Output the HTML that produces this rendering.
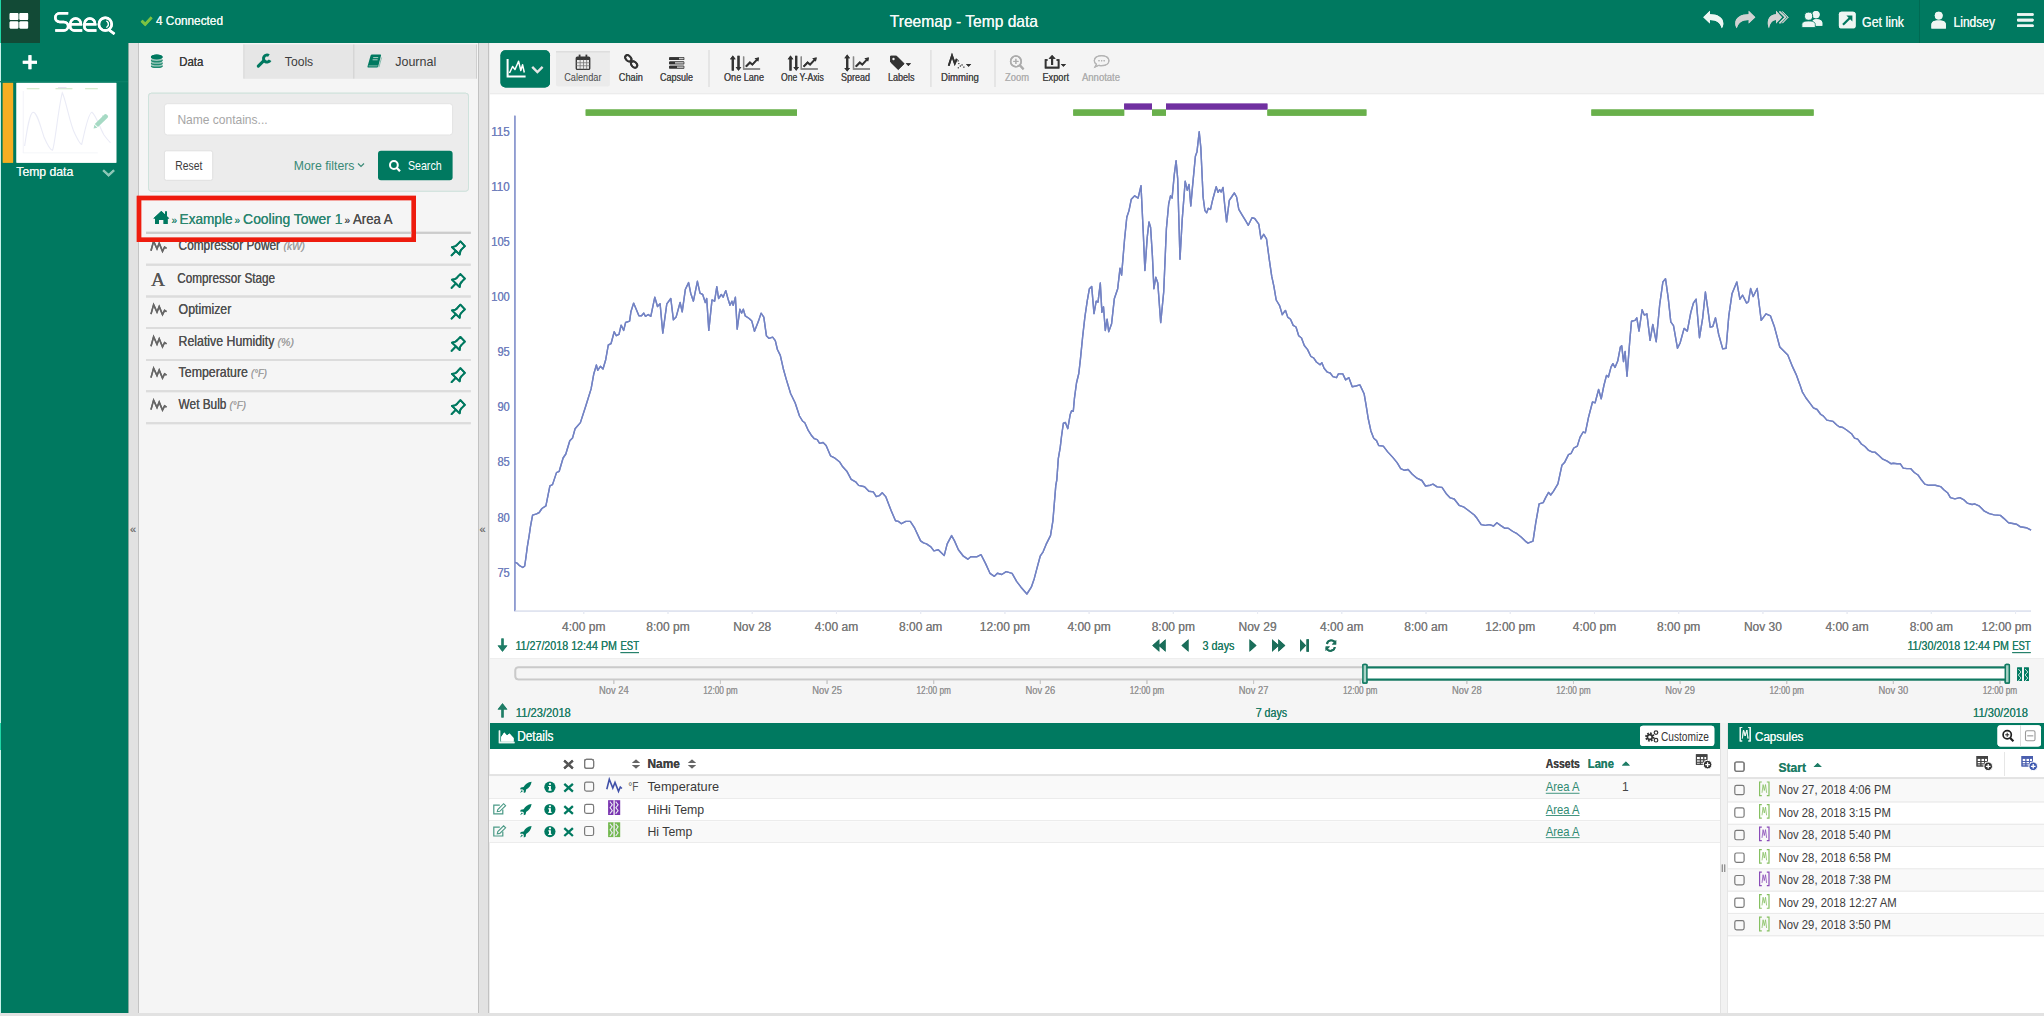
<!DOCTYPE html>
<html><head><meta charset="utf-8"><title>Seeq</title>
<style>
*{margin:0;padding:0}
html,body{width:2044px;height:1016px;overflow:hidden;background:#fff}
svg{display:block;font-family:"Liberation Sans",sans-serif}
</style></head><body>
<svg width="2044" height="1016" viewBox="0 0 2044 1016">
<rect x="0" y="0" width="2044" height="1016" fill="#e2e2e2" />
<rect x="0" y="0" width="2044" height="43.5" fill="#007960" />
<rect x="0" y="0" width="40" height="43" fill="#124a36" />
<rect x="0" y="43" width="128" height="970" fill="#007960" />
<rect x="0" y="0" width="1" height="1013" fill="#c8f2ea" />
<rect x="0" y="0" width="1" height="43" fill="#1fd6a6" />
<rect x="0" y="723" width="1" height="27" fill="#1fd6a6" />
<rect x="128" y="43" width="11" height="970" fill="#e2e2e2" />
<rect x="128" y="43" width="1" height="970" fill="#86a89e" />
<rect x="138" y="43" width="1" height="970" fill="#c4c4c4" />
<rect x="139" y="43" width="339" height="970" fill="#f5f5f5" />
<rect x="478" y="43" width="11" height="970" fill="#e2e2e2" />
<rect x="478" y="43" width="1" height="970" fill="#c2c2c2" />
<rect x="488" y="43" width="1" height="970" fill="#c2c2c2" />
<rect x="489" y="43" width="1" height="970" fill="#ebebeb" />
<rect x="490" y="43" width="1554" height="51" fill="#f4f4f4" />
<rect x="490" y="93" width="1554" height="1" fill="#ececec" />
<rect x="490" y="94" width="1554" height="564" fill="#ffffff" />
<rect x="490" y="94" width="1554" height="1" fill="#f9f9f9" />
<rect x="490" y="658" width="1554" height="65" fill="#f5f5f5" />
<rect x="490" y="658" width="1554" height="1" fill="#eeeeee" />
<rect x="490" y="723" width="1230" height="26" fill="#007960" />
<rect x="490" y="749" width="1230" height="264" fill="#ffffff" />
<rect x="1720" y="723" width="8" height="290" fill="#f2f2f2" />
<rect x="1720" y="723" width="1" height="290" fill="#e2e2e2" />
<rect x="1727" y="723" width="1" height="290" fill="#e6e6e6" />
<rect x="1728" y="723" width="316" height="26" fill="#007960" />
<rect x="1728" y="749" width="316" height="264" fill="#ffffff" />
<rect x="0" y="0" width="2044" height="1016" fill="#e2e2e2" />
<rect x="0" y="0" width="2044" height="43.5" fill="#007960" />
<rect x="0" y="0" width="40" height="43" fill="#124a36" />
<rect x="0" y="43" width="128" height="970" fill="#007960" />
<rect x="0" y="0" width="1" height="1013" fill="#c8f2ea" />
<rect x="0" y="0" width="1" height="43" fill="#1fd6a6" />
<rect x="0" y="723" width="1" height="27" fill="#1fd6a6" />
<rect x="128" y="43" width="11" height="970" fill="#e2e2e2" />
<rect x="128" y="43" width="1" height="970" fill="#86a89e" />
<rect x="138" y="43" width="1" height="970" fill="#c4c4c4" />
<rect x="139" y="43" width="339" height="970" fill="#f5f5f5" />
<rect x="478" y="43" width="11" height="970" fill="#e2e2e2" />
<rect x="478" y="43" width="1" height="970" fill="#c2c2c2" />
<rect x="488" y="43" width="1" height="970" fill="#c2c2c2" />
<rect x="489" y="43" width="1" height="970" fill="#ebebeb" />
<rect x="490" y="43" width="1554" height="51" fill="#f4f4f4" />
<rect x="490" y="93" width="1554" height="1" fill="#ececec" />
<rect x="490" y="94" width="1554" height="564" fill="#ffffff" />
<rect x="490" y="94" width="1554" height="1" fill="#f9f9f9" />
<rect x="490" y="658" width="1554" height="65" fill="#f5f5f5" />
<rect x="490" y="658" width="1554" height="1" fill="#eeeeee" />
<rect x="490" y="723" width="1230" height="26" fill="#007960" />
<rect x="490" y="749" width="1230" height="264" fill="#ffffff" />
<rect x="1720" y="723" width="8" height="290" fill="#f2f2f2" />
<rect x="1720" y="723" width="1" height="290" fill="#e2e2e2" />
<rect x="1727" y="723" width="1" height="290" fill="#e6e6e6" />
<rect x="1728" y="723" width="316" height="26" fill="#007960" />
<rect x="1728" y="749" width="316" height="264" fill="#ffffff" />
<rect x="9.7" y="13" width="8.6" height="6.9" fill="#ffffff" rx="1"/>
<rect x="19.5" y="13" width="8.6" height="6.9" fill="#ffffff" rx="1"/>
<rect x="9.7" y="21.6" width="8.6" height="6.9" fill="#ffffff" rx="1"/>
<rect x="19.5" y="21.6" width="8.6" height="6.9" fill="#ffffff" rx="1"/>
<path d="M68.2,13.3 H59.6 A4.3,4.3 0 0 0 59.6,21.9 H63.9 A4.25,4.25 0 0 1 63.9,30.4 H55.3" fill="none" stroke="#ffffff" stroke-width="2.5" />
<path d="M70.2,24.2 A5.4,5.6 0 0 1 81,24.2 H70.2 V26.4 A4,4 0 0 0 74.2,30.4 H82.2" fill="none" stroke="#ffffff" stroke-width="2.5" />
<path d="M84.4,24.2 A5.4,5.6 0 0 1 95.2,24.2 H84.4 V26.4 A4,4 0 0 0 88.4,30.4 H96.4" fill="none" stroke="#ffffff" stroke-width="2.5" />
<circle cx="105.3" cy="24.2" r="6.4" fill="none" stroke="#fff" stroke-width="2.5"/>
<path d="M106.5,21 A3.6,3.6 0 0 1 106.5,27.4" fill="none" stroke="#ffffff" stroke-width="1.1" />
<path d="M108.5,29.5 L114.5,34" fill="none" stroke="#ffffff" stroke-width="2.6" />
<path d="M141.6,20.8 L145.2,24.3 L151.6,17.3" fill="none" stroke="#7cc242" stroke-width="2.6" />
<text x="156" y="25.1" font-size="12.8" fill="#eef7f4" textLength="67" lengthAdjust="spacingAndGlyphs" >4 Connected</text>
<text x="889.8" y="26.6" font-size="16.6" fill="#f2f9f7" textLength="148.2" lengthAdjust="spacingAndGlyphs" >Treemap - Temp data</text>
<path d="M1703.3,17.2 L1709.9,10.8 V14.3 C1717.8,14.3 1723.3,17.6 1723.3,23.4 C1723.3,25.4 1722.6,27 1721.8,28.3 C1720.8,23.4 1716.8,19.9 1709.9,19.9 V23.6 Z" fill="#eef6f3" />
<path d="M 1755.30 17.20 L 1748.70 10.80 V 14.30 C 1740.80 14.30 1735.30 17.60 1735.30 23.40 C 1735.30 25.40 1736.00 27.00 1736.80 28.30 C 1737.80 23.40 1741.80 19.90 1748.70 19.90 V 23.60 Z" fill="#d2d2d2" />
<path d="M1782,17.2 L1776,10.8 V14.3 C1771,14.3 1767.8,18 1767.8,23 C1767.8,25 1768.3,26.8 1769,28.3 C1769.8,23.6 1772,19.9 1776,19.9 V23.6 Z" fill="#d2d2d2" />
<path d="M1779.5,11.5 L1785.5,17.3 L1779.5,23.2" fill="none" stroke="#d2d2d2" stroke-width="1.3" />
<path d="M1782.3,11.5 L1788,17.3 L1782.3,23.2" fill="none" stroke="#d2d2d2" stroke-width="1.0" />
<circle cx="1816" cy="14.6" r="3.6" fill="#eef6f3"/>
<path d="M1812.2,25.8 V22.5 C1812.2,20.3 1813.8,19.2 1816,19.2 C1820,19.2 1822.3,20.5 1822.3,23 V25.8 Z" fill="#eef6f3" />
<circle cx="1808.6" cy="16.2" r="4.1" stroke="#007960" stroke-width="1" fill="#eef6f3"/>
<path d="M1801.9,27.5 V24.6 C1801.9,22.2 1804,21 1808.6,21 C1813.2,21 1815.3,22.2 1815.3,24.6 V27.5 Z" fill="#eef6f3" stroke="#007960" stroke-width="0.8" />
<rect x="1838.9" y="11.7" width="16.7" height="16.6" fill="#eef6f3" rx="2.6"/>
<path d="M1843,24.8 L1850.6,17.2" fill="none" stroke="#007960" stroke-width="2.2" />
<path d="M1846.4,15.4 H1852.4 V21.4 Z" fill="#007960" />
<text x="1862" y="27" font-size="14.1" fill="#eef6f3" textLength="42" lengthAdjust="spacingAndGlyphs" >Get link</text>
<rect x="1919" y="0" width="1" height="43" fill="#006a53" />
<circle cx="1938.7" cy="15.6" r="3.9" fill="#eef6f3"/>
<path d="M1931.4,28.5 V25 C1931.4,22 1933.5,20.6 1938.7,20.6 C1943.9,20.6 1945.9,22 1945.9,25 V28.5 Z" fill="#eef6f3" />
<text x="1953.6" y="27" font-size="14.1" fill="#eef6f3" textLength="41.4" lengthAdjust="spacingAndGlyphs" >Lindsey</text>
<rect x="2017" y="13.2" width="16.6" height="2.6" fill="#eef6f3" rx="0.8"/>
<rect x="2017" y="18.8" width="16.6" height="2.6" fill="#eef6f3" rx="0.8"/>
<rect x="2017" y="24.4" width="16.6" height="2.6" fill="#eef6f3" rx="0.8"/>
<rect x="9.7" y="13" width="8.6" height="6.9" fill="#ffffff" rx="1"/>
<rect x="19.5" y="13" width="8.6" height="6.9" fill="#ffffff" rx="1"/>
<rect x="9.7" y="21.6" width="8.6" height="6.9" fill="#ffffff" rx="1"/>
<rect x="19.5" y="21.6" width="8.6" height="6.9" fill="#ffffff" rx="1"/>
<path d="M68.2,13.3 H59.6 A4.3,4.3 0 0 0 59.6,21.9 H63.9 A4.25,4.25 0 0 1 63.9,30.4 H55.3" fill="none" stroke="#ffffff" stroke-width="2.5" />
<path d="M70.2,24.2 A5.4,5.6 0 0 1 81,24.2 H70.2 V26.4 A4,4 0 0 0 74.2,30.4 H82.2" fill="none" stroke="#ffffff" stroke-width="2.5" />
<path d="M84.4,24.2 A5.4,5.6 0 0 1 95.2,24.2 H84.4 V26.4 A4,4 0 0 0 88.4,30.4 H96.4" fill="none" stroke="#ffffff" stroke-width="2.5" />
<circle cx="105.3" cy="24.2" r="6.4" fill="none" stroke="#fff" stroke-width="2.5"/>
<path d="M106.5,21 A3.6,3.6 0 0 1 106.5,27.4" fill="none" stroke="#ffffff" stroke-width="1.1" />
<path d="M108.5,29.5 L114.5,34" fill="none" stroke="#ffffff" stroke-width="2.6" />
<path d="M141.6,20.8 L145.2,24.3 L151.6,17.3" fill="none" stroke="#7cc242" stroke-width="2.6" />
<text x="156" y="25.1" font-size="12.8" fill="#eef7f4" textLength="67" lengthAdjust="spacingAndGlyphs" >4 Connected</text>
<text x="889.8" y="26.6" font-size="16.6" fill="#f2f9f7" textLength="148.2" lengthAdjust="spacingAndGlyphs" >Treemap - Temp data</text>
<path d="M1703.3,17.2 L1709.9,10.8 V14.3 C1717.8,14.3 1723.3,17.6 1723.3,23.4 C1723.3,25.4 1722.6,27 1721.8,28.3 C1720.8,23.4 1716.8,19.9 1709.9,19.9 V23.6 Z" fill="#eef6f3" />
<path d="M 1755.30 17.20 L 1748.70 10.80 V 14.30 C 1740.80 14.30 1735.30 17.60 1735.30 23.40 C 1735.30 25.40 1736.00 27.00 1736.80 28.30 C 1737.80 23.40 1741.80 19.90 1748.70 19.90 V 23.60 Z" fill="#d2d2d2" />
<path d="M1782,17.2 L1776,10.8 V14.3 C1771,14.3 1767.8,18 1767.8,23 C1767.8,25 1768.3,26.8 1769,28.3 C1769.8,23.6 1772,19.9 1776,19.9 V23.6 Z" fill="#d2d2d2" />
<path d="M1779.5,11.5 L1785.5,17.3 L1779.5,23.2" fill="none" stroke="#d2d2d2" stroke-width="1.3" />
<path d="M1782.3,11.5 L1788,17.3 L1782.3,23.2" fill="none" stroke="#d2d2d2" stroke-width="1.0" />
<circle cx="1816" cy="14.6" r="3.6" fill="#eef6f3"/>
<path d="M1812.2,25.8 V22.5 C1812.2,20.3 1813.8,19.2 1816,19.2 C1820,19.2 1822.3,20.5 1822.3,23 V25.8 Z" fill="#eef6f3" />
<circle cx="1808.6" cy="16.2" r="4.1" stroke="#007960" stroke-width="1" fill="#eef6f3"/>
<path d="M1801.9,27.5 V24.6 C1801.9,22.2 1804,21 1808.6,21 C1813.2,21 1815.3,22.2 1815.3,24.6 V27.5 Z" fill="#eef6f3" stroke="#007960" stroke-width="0.8" />
<rect x="1838.9" y="11.7" width="16.7" height="16.6" fill="#eef6f3" rx="2.6"/>
<path d="M1843,24.8 L1850.6,17.2" fill="none" stroke="#007960" stroke-width="2.2" />
<path d="M1846.4,15.4 H1852.4 V21.4 Z" fill="#007960" />
<text x="1862" y="27" font-size="14.1" fill="#eef6f3" textLength="42" lengthAdjust="spacingAndGlyphs" >Get link</text>
<rect x="1919" y="0" width="1" height="43" fill="#006a53" />
<circle cx="1938.7" cy="15.6" r="3.9" fill="#eef6f3"/>
<path d="M1931.4,28.5 V25 C1931.4,22 1933.5,20.6 1938.7,20.6 C1943.9,20.6 1945.9,22 1945.9,25 V28.5 Z" fill="#eef6f3" />
<text x="1953.6" y="27" font-size="14.1" fill="#eef6f3" textLength="41.4" lengthAdjust="spacingAndGlyphs" >Lindsey</text>
<rect x="2017" y="13.2" width="16.6" height="2.6" fill="#eef6f3" rx="0.8"/>
<rect x="2017" y="18.8" width="16.6" height="2.6" fill="#eef6f3" rx="0.8"/>
<rect x="2017" y="24.4" width="16.6" height="2.6" fill="#eef6f3" rx="0.8"/>
<rect x="22.8" y="60.8" width="14.2" height="2.9" fill="#fff" />
<rect x="28.5" y="55.2" width="2.9" height="14" fill="#fff" />
<rect x="0" y="81.2" width="128" height="1" fill="#0b8068" />
<rect x="2.8" y="82.9" width="10.3" height="79.8" fill="#f6ae22" />
<rect x="16.5" y="82.9" width="99.8" height="79.8" fill="#ffffff" />
<text x="16.3" y="175.8" font-size="12.2" fill="#e9f4f0" textLength="57" lengthAdjust="spacingAndGlyphs" >Temp data</text>
<path d="M103.2,170.3 L108.6,175.2 L114,170.3" fill="none" stroke="#8cc6b6" stroke-width="2.2" />
<rect x="26.7" y="88" width="12.7" height="1.3" fill="#d8ecd0" />
<rect x="55.5" y="88" width="16.9" height="1.3" fill="#d8ecd0" />
<rect x="58" y="87.3" width="8.5" height="1" fill="#e2d6ee" />
<rect x="85.1" y="88" width="12.7" height="1.3" fill="#d8ecd0" />
<rect x="22.8" y="91" width="0.8" height="62" fill="#f0f1f7" />
<rect x="22.8" y="152.5" width="75" height="0.8" fill="#f2f3f8" />
<path d="M24.6,146 C27,130 29.5,113 33,112.2 C37,112 40,125 44,137 C47,144 50,150 52.5,150.3 C55,145 58,110 62.3,92.7 C66,100 70,125 75,134 C78,140 80,144.4 81.7,144.4 C84,135 88,113 91.9,112.2 C96,115 100,128 104,135 C107,139 109,141.5 110.5,142.7" fill="none" stroke="#eaebf6" stroke-width="1.1" />
<path d="M94.8,123.9 L104.4,114.6 Q105.5,113.6 106.6,114.6 L107.6,115.6 Q108.6,116.7 107.6,117.8 L98,127.1 Z" fill="#a6dac4" />
<path d="M93.6,128.4 L94.4,124.8 L97.4,127.7 Z" fill="#a6dac4" />
<rect x="102.2" y="115.6" width="0.9" height="0.9" fill="#a6dac4" />
<text x="130" y="533" font-size="11" fill="#777" >«</text>
<text x="479.5" y="533" font-size="11" fill="#777" >«</text>
<rect x="243.5" y="44" width="110" height="34.5" fill="#eeeeee" />
<rect x="243.5" y="44.6" width="110" height="33.9" fill="#e6e6e6" />
<rect x="243.5" y="44.5" width="1" height="34" fill="#dadada" />
<rect x="353" y="44" width="124" height="34.5" fill="#eeeeee" />
<rect x="353" y="44.6" width="124" height="33.9" fill="#e6e6e6" />
<rect x="353" y="44.5" width="1.5" height="34" fill="#d6d6d6" />
<rect x="476" y="44.5" width="1" height="34" fill="#cfcfcf" />
<ellipse cx="156.75" cy="66.2" rx="5.85" ry="1.9" fill="#1f8a70"/>
<ellipse cx="156.75" cy="65.2" rx="5.85" ry="1.4" fill="#9fc9bd"/>
<ellipse cx="156.75" cy="63.4" rx="5.85" ry="1.9" fill="#1f8a70"/>
<ellipse cx="156.75" cy="62.4" rx="5.85" ry="1.4" fill="#9fc9bd"/>
<ellipse cx="156.75" cy="60.6" rx="5.85" ry="1.9" fill="#1f8a70"/>
<ellipse cx="156.75" cy="59.6" rx="5.85" ry="1.4" fill="#9fc9bd"/>
<ellipse cx="156.75" cy="57.0" rx="5.85" ry="2.4" fill="#007960"/>
<text x="179.2" y="66.2" font-size="13.1" fill="#3c3c3c" textLength="24.1" lengthAdjust="spacingAndGlyphs" >Data</text>
<path d="M258.3,66.1 L263.6,60.8" fill="none" stroke="#007960" stroke-width="3.1" stroke-linecap="round"/>
<path d="M268.9,55.6 A3.5,3.5 0 1 0 270.1,60.2" fill="none" stroke="#007960" stroke-width="3.0" />
<text x="284.8" y="66.2" font-size="13.7" fill="#3c3c3c" textLength="28.4" lengthAdjust="spacingAndGlyphs" >Tools</text>
<path d="M372,54.6 H380.4 Q381.3,54.6 381,55.6 L378.2,66.4 Q377.9,67.4 377,67.4 H368.2 Q367.2,67.4 367.5,66.4 L370.6,55.4 Q370.9,54.6 372,54.6 Z" fill="#007960" />
<rect x="373.2" y="57" width="5" height="1.1" fill="#9cc8bb" />
<rect x="372.6" y="59.2" width="5" height="1.1" fill="#9cc8bb" />
<path d="M368.6,65.9 H377.6" fill="none" stroke="#8fc2b3" stroke-width="0.9" />
<path d="M381.6,57.5 L378.9,67.2" fill="none" stroke="#7fb8a8" stroke-width="0.9" />
<text x="395.2" y="66.2" font-size="13.7" fill="#3c3c3c" textLength="41" lengthAdjust="spacingAndGlyphs" >Journal</text>
<rect x="148.5" y="93.2" width="320" height="98" fill="#ececec" rx="3" stroke="#cfe2dc" stroke-width="1"/>
<rect x="164.4" y="103.7" width="288.2" height="31.3" fill="#ffffff" rx="3" stroke="#e3e3e3" stroke-width="1"/>
<text x="177.4" y="124.2" font-size="13.1" fill="#a6a6a6" textLength="90.2" lengthAdjust="spacingAndGlyphs" >Name contains...</text>
<rect x="164.4" y="150.8" width="48.3" height="29.5" fill="#ffffff" rx="2" stroke="#e0e0e0" stroke-width="1"/>
<text x="175.3" y="170" font-size="12.6" fill="#3c3c3c" textLength="27.1" lengthAdjust="spacingAndGlyphs" >Reset</text>
<text x="293.8" y="170" font-size="13.1" fill="#3a8a77" textLength="60.7" lengthAdjust="spacingAndGlyphs" >More filters</text>
<path d="M358,163.5 L361,166.5 L364,163.5" fill="none" stroke="#3a8a77" stroke-width="1.2" />
<rect x="378" y="150.8" width="74.6" height="29.5" fill="#007960" rx="3"/>
<circle cx="393.9" cy="165" r="3.9" fill="none" stroke="#fff" stroke-width="2"/>
<path d="M396.6,167.8 L400,171.2" fill="none" stroke="#fff" stroke-width="2.3" />
<text x="407.9" y="170" font-size="12.6" fill="#ffffff" textLength="33.8" lengthAdjust="spacingAndGlyphs" >Search</text>
<path d="M153.3,218.6 L161.3,211 L169.3,218.6 L167.6,218.6 L167.6,223.9 L163.6,223.9 L163.6,220 L159,220 L159,223.9 L155,223.9 L155,218.6 Z" fill="#007960" />
<rect x="165" y="211.5" width="2" height="4.5" fill="#007960" />
<text x="171.5" y="223.9" font-size="10" fill="#2b8670" >»</text>
<text x="179.6" y="223.9" font-size="15.1" fill="#2b8670" textLength="52.9" lengthAdjust="spacingAndGlyphs" >Example</text>
<text x="234.6" y="223.9" font-size="10" fill="#2b8670" >»</text>
<text x="243.1" y="223.9" font-size="15.1" fill="#2b8670" textLength="99.4" lengthAdjust="spacingAndGlyphs" >Cooling Tower 1</text>
<text x="344.6" y="223.9" font-size="10" fill="#4d4d4d" >»</text>
<text x="353.1" y="223.9" font-size="15.1" fill="#4d4d4d" textLength="39.4" lengthAdjust="spacingAndGlyphs" >Area A</text>
<rect x="146" y="231.8" width="324.7" height="2" fill="#cccccc" />
<path d="M151,250.8 L153.6,241.3 L157,248.8 L159.2,243.3 L162.5,251.3 L164.6,247.0 L166.5,248.3" fill="none" stroke="#666" stroke-width="1.5" />
<text x="178.6" y="250.4" font-size="13.9" fill="#505050" textLength="101.4" lengthAdjust="spacingAndGlyphs" >Compressor Power</text>
<text x="283.5" y="250.4" font-size="11" fill="#a0a0a0" font-style="italic" textLength="21.5" lengthAdjust="spacingAndGlyphs" >(kW)</text>
<g transform="translate(0.00,0.00)"><path d="M451.9,247.1 Q455.8,246.9 457.8,244.1 L460.4,241.4 L464.9,246.1 L462.3,248.6 Q459.6,250.6 459.7,254.5 Z" fill="none" stroke="#007960" stroke-width="1.8" stroke-linejoin="round"/><path d="M451.6,255.3 L455.7,251.1" stroke="#007960" stroke-width="1.9" stroke-linecap="round"/></g>
<text x="151" y="286.0" font-size="19.5" fill="#555" font-family="Liberation Serif">A</text>
<text x="177.2" y="283.0" font-size="13.9" fill="#505050" textLength="97.9" lengthAdjust="spacingAndGlyphs" >Compressor Stage</text>
<g transform="translate(0.00,32.60)"><path d="M451.9,247.1 Q455.8,246.9 457.8,244.1 L460.4,241.4 L464.9,246.1 L462.3,248.6 Q459.6,250.6 459.7,254.5 Z" fill="none" stroke="#007960" stroke-width="1.8" stroke-linejoin="round"/><path d="M451.6,255.3 L455.7,251.1" stroke="#007960" stroke-width="1.9" stroke-linecap="round"/></g>
<path d="M151,314.09999999999997 L153.6,304.59999999999997 L157,312.09999999999997 L159.2,306.59999999999997 L162.5,314.59999999999997 L164.6,310.29999999999995 L166.5,311.59999999999997" fill="none" stroke="#666" stroke-width="1.5" />
<text x="178.6" y="313.7" font-size="13.9" fill="#505050" textLength="52.7" lengthAdjust="spacingAndGlyphs" >Optimizer</text>
<g transform="translate(0.00,63.30)"><path d="M451.9,247.1 Q455.8,246.9 457.8,244.1 L460.4,241.4 L464.9,246.1 L462.3,248.6 Q459.6,250.6 459.7,254.5 Z" fill="none" stroke="#007960" stroke-width="1.8" stroke-linejoin="round"/><path d="M451.6,255.3 L455.7,251.1" stroke="#007960" stroke-width="1.9" stroke-linecap="round"/></g>
<path d="M151,346.29999999999995 L153.6,336.79999999999995 L157,344.29999999999995 L159.2,338.79999999999995 L162.5,346.79999999999995 L164.6,342.49999999999994 L166.5,343.79999999999995" fill="none" stroke="#666" stroke-width="1.5" />
<text x="178.6" y="345.9" font-size="13.9" fill="#505050" textLength="95.8" lengthAdjust="spacingAndGlyphs" >Relative Humidity</text>
<text x="277.6" y="345.9" font-size="11" fill="#a0a0a0" font-style="italic" textLength="16.4" lengthAdjust="spacingAndGlyphs" >(%)</text>
<g transform="translate(0.00,95.50)"><path d="M451.9,247.1 Q455.8,246.9 457.8,244.1 L460.4,241.4 L464.9,246.1 L462.3,248.6 Q459.6,250.6 459.7,254.5 Z" fill="none" stroke="#007960" stroke-width="1.8" stroke-linejoin="round"/><path d="M451.6,255.3 L455.7,251.1" stroke="#007960" stroke-width="1.9" stroke-linecap="round"/></g>
<path d="M151,377.59999999999997 L153.6,368.09999999999997 L157,375.59999999999997 L159.2,370.09999999999997 L162.5,378.09999999999997 L164.6,373.79999999999995 L166.5,375.09999999999997" fill="none" stroke="#666" stroke-width="1.5" />
<text x="178.6" y="377.2" font-size="13.9" fill="#505050" textLength="69.4" lengthAdjust="spacingAndGlyphs" >Temperature</text>
<text x="251" y="377.2" font-size="11" fill="#a0a0a0" font-style="italic" textLength="16" lengthAdjust="spacingAndGlyphs" >(°F)</text>
<g transform="translate(0.00,126.80)"><path d="M451.9,247.1 Q455.8,246.9 457.8,244.1 L460.4,241.4 L464.9,246.1 L462.3,248.6 Q459.6,250.6 459.7,254.5 Z" fill="none" stroke="#007960" stroke-width="1.8" stroke-linejoin="round"/><path d="M451.6,255.3 L455.7,251.1" stroke="#007960" stroke-width="1.9" stroke-linecap="round"/></g>
<path d="M151,409.59999999999997 L153.6,400.09999999999997 L157,407.59999999999997 L159.2,402.09999999999997 L162.5,410.09999999999997 L164.6,405.79999999999995 L166.5,407.09999999999997" fill="none" stroke="#666" stroke-width="1.5" />
<text x="178.6" y="409.2" font-size="13.9" fill="#505050" textLength="47.8" lengthAdjust="spacingAndGlyphs" >Wet Bulb</text>
<text x="229.6" y="409.2" font-size="11" fill="#a0a0a0" font-style="italic" textLength="16.4" lengthAdjust="spacingAndGlyphs" >(°F)</text>
<g transform="translate(0.00,158.80)"><path d="M451.9,247.1 Q455.8,246.9 457.8,244.1 L460.4,241.4 L464.9,246.1 L462.3,248.6 Q459.6,250.6 459.7,254.5 Z" fill="none" stroke="#007960" stroke-width="1.8" stroke-linejoin="round"/><path d="M451.6,255.3 L455.7,251.1" stroke="#007960" stroke-width="1.9" stroke-linecap="round"/></g>
<rect x="146" y="263.7" width="324.7" height="2" fill="#dcdcdc" />
<rect x="146" y="295.5" width="324.7" height="2" fill="#dcdcdc" />
<rect x="146" y="327.0" width="324.7" height="2" fill="#dcdcdc" />
<rect x="146" y="359.0" width="324.7" height="2" fill="#dcdcdc" />
<rect x="146" y="390.2" width="324.7" height="2" fill="#dcdcdc" />
<rect x="146" y="422.2" width="324.7" height="2" fill="#dcdcdc" />
<rect x="139" y="198" width="274.8" height="41.8" fill="none" stroke="#ee1c0e" stroke-width="4.4"/>
<rect x="22.8" y="60.8" width="14.2" height="2.9" fill="#fff" />
<rect x="28.5" y="55.2" width="2.9" height="14" fill="#fff" />
<rect x="0" y="81.2" width="128" height="1" fill="#0b8068" />
<rect x="2.8" y="82.9" width="10.3" height="79.8" fill="#f6ae22" />
<rect x="16.5" y="82.9" width="99.8" height="79.8" fill="#ffffff" />
<text x="16.3" y="175.8" font-size="12.2" fill="#e9f4f0" textLength="57" lengthAdjust="spacingAndGlyphs" >Temp data</text>
<path d="M103.2,170.3 L108.6,175.2 L114,170.3" fill="none" stroke="#8cc6b6" stroke-width="2.2" />
<rect x="26.7" y="88" width="12.7" height="1.3" fill="#d8ecd0" />
<rect x="55.5" y="88" width="16.9" height="1.3" fill="#d8ecd0" />
<rect x="58" y="87.3" width="8.5" height="1" fill="#e2d6ee" />
<rect x="85.1" y="88" width="12.7" height="1.3" fill="#d8ecd0" />
<rect x="22.8" y="91" width="0.8" height="62" fill="#f0f1f7" />
<rect x="22.8" y="152.5" width="75" height="0.8" fill="#f2f3f8" />
<path d="M24.6,146 C27,130 29.5,113 33,112.2 C37,112 40,125 44,137 C47,144 50,150 52.5,150.3 C55,145 58,110 62.3,92.7 C66,100 70,125 75,134 C78,140 80,144.4 81.7,144.4 C84,135 88,113 91.9,112.2 C96,115 100,128 104,135 C107,139 109,141.5 110.5,142.7" fill="none" stroke="#eaebf6" stroke-width="1.1" />
<path d="M94.8,123.9 L104.4,114.6 Q105.5,113.6 106.6,114.6 L107.6,115.6 Q108.6,116.7 107.6,117.8 L98,127.1 Z" fill="#a6dac4" />
<path d="M93.6,128.4 L94.4,124.8 L97.4,127.7 Z" fill="#a6dac4" />
<rect x="102.2" y="115.6" width="0.9" height="0.9" fill="#a6dac4" />
<text x="130" y="533" font-size="11" fill="#777" >«</text>
<text x="479.5" y="533" font-size="11" fill="#777" >«</text>
<rect x="243.5" y="44" width="110" height="34.5" fill="#eeeeee" />
<rect x="243.5" y="44.6" width="110" height="33.9" fill="#e6e6e6" />
<rect x="243.5" y="44.5" width="1" height="34" fill="#dadada" />
<rect x="353" y="44" width="124" height="34.5" fill="#eeeeee" />
<rect x="353" y="44.6" width="124" height="33.9" fill="#e6e6e6" />
<rect x="353" y="44.5" width="1.5" height="34" fill="#d6d6d6" />
<rect x="476" y="44.5" width="1" height="34" fill="#cfcfcf" />
<ellipse cx="156.75" cy="66.2" rx="5.85" ry="1.9" fill="#1f8a70"/>
<ellipse cx="156.75" cy="65.2" rx="5.85" ry="1.4" fill="#9fc9bd"/>
<ellipse cx="156.75" cy="63.4" rx="5.85" ry="1.9" fill="#1f8a70"/>
<ellipse cx="156.75" cy="62.4" rx="5.85" ry="1.4" fill="#9fc9bd"/>
<ellipse cx="156.75" cy="60.6" rx="5.85" ry="1.9" fill="#1f8a70"/>
<ellipse cx="156.75" cy="59.6" rx="5.85" ry="1.4" fill="#9fc9bd"/>
<ellipse cx="156.75" cy="57.0" rx="5.85" ry="2.4" fill="#007960"/>
<text x="179.2" y="66.2" font-size="13.1" fill="#3c3c3c" textLength="24.1" lengthAdjust="spacingAndGlyphs" >Data</text>
<path d="M258.3,66.1 L263.6,60.8" fill="none" stroke="#007960" stroke-width="3.1" stroke-linecap="round"/>
<path d="M268.9,55.6 A3.5,3.5 0 1 0 270.1,60.2" fill="none" stroke="#007960" stroke-width="3.0" />
<text x="284.8" y="66.2" font-size="13.7" fill="#3c3c3c" textLength="28.4" lengthAdjust="spacingAndGlyphs" >Tools</text>
<path d="M372,54.6 H380.4 Q381.3,54.6 381,55.6 L378.2,66.4 Q377.9,67.4 377,67.4 H368.2 Q367.2,67.4 367.5,66.4 L370.6,55.4 Q370.9,54.6 372,54.6 Z" fill="#007960" />
<rect x="373.2" y="57" width="5" height="1.1" fill="#9cc8bb" />
<rect x="372.6" y="59.2" width="5" height="1.1" fill="#9cc8bb" />
<path d="M368.6,65.9 H377.6" fill="none" stroke="#8fc2b3" stroke-width="0.9" />
<path d="M381.6,57.5 L378.9,67.2" fill="none" stroke="#7fb8a8" stroke-width="0.9" />
<text x="395.2" y="66.2" font-size="13.7" fill="#3c3c3c" textLength="41" lengthAdjust="spacingAndGlyphs" >Journal</text>
<rect x="148.5" y="93.2" width="320" height="98" fill="#ececec" rx="3" stroke="#cfe2dc" stroke-width="1"/>
<rect x="164.4" y="103.7" width="288.2" height="31.3" fill="#ffffff" rx="3" stroke="#e3e3e3" stroke-width="1"/>
<text x="177.4" y="124.2" font-size="13.1" fill="#a6a6a6" textLength="90.2" lengthAdjust="spacingAndGlyphs" >Name contains...</text>
<rect x="164.4" y="150.8" width="48.3" height="29.5" fill="#ffffff" rx="2" stroke="#e0e0e0" stroke-width="1"/>
<text x="175.3" y="170" font-size="12.6" fill="#3c3c3c" textLength="27.1" lengthAdjust="spacingAndGlyphs" >Reset</text>
<text x="293.8" y="170" font-size="13.1" fill="#3a8a77" textLength="60.7" lengthAdjust="spacingAndGlyphs" >More filters</text>
<path d="M358,163.5 L361,166.5 L364,163.5" fill="none" stroke="#3a8a77" stroke-width="1.2" />
<rect x="378" y="150.8" width="74.6" height="29.5" fill="#007960" rx="3"/>
<circle cx="393.9" cy="165" r="3.9" fill="none" stroke="#fff" stroke-width="2"/>
<path d="M396.6,167.8 L400,171.2" fill="none" stroke="#fff" stroke-width="2.3" />
<text x="407.9" y="170" font-size="12.6" fill="#ffffff" textLength="33.8" lengthAdjust="spacingAndGlyphs" >Search</text>
<path d="M153.3,218.6 L161.3,211 L169.3,218.6 L167.6,218.6 L167.6,223.9 L163.6,223.9 L163.6,220 L159,220 L159,223.9 L155,223.9 L155,218.6 Z" fill="#007960" />
<rect x="165" y="211.5" width="2" height="4.5" fill="#007960" />
<text x="171.5" y="223.9" font-size="10" fill="#2b8670" >»</text>
<text x="179.6" y="223.9" font-size="15.1" fill="#2b8670" textLength="52.9" lengthAdjust="spacingAndGlyphs" >Example</text>
<text x="234.6" y="223.9" font-size="10" fill="#2b8670" >»</text>
<text x="243.1" y="223.9" font-size="15.1" fill="#2b8670" textLength="99.4" lengthAdjust="spacingAndGlyphs" >Cooling Tower 1</text>
<text x="344.6" y="223.9" font-size="10" fill="#4d4d4d" >»</text>
<text x="353.1" y="223.9" font-size="15.1" fill="#4d4d4d" textLength="39.4" lengthAdjust="spacingAndGlyphs" >Area A</text>
<rect x="146" y="231.8" width="324.7" height="2" fill="#cccccc" />
<path d="M151,250.8 L153.6,241.3 L157,248.8 L159.2,243.3 L162.5,251.3 L164.6,247.0 L166.5,248.3" fill="none" stroke="#666" stroke-width="1.5" />
<text x="178.6" y="250.4" font-size="13.9" fill="#505050" textLength="101.4" lengthAdjust="spacingAndGlyphs" >Compressor Power</text>
<text x="283.5" y="250.4" font-size="11" fill="#a0a0a0" font-style="italic" textLength="21.5" lengthAdjust="spacingAndGlyphs" >(kW)</text>
<g transform="translate(0.00,0.00)"><path d="M451.9,247.1 Q455.8,246.9 457.8,244.1 L460.4,241.4 L464.9,246.1 L462.3,248.6 Q459.6,250.6 459.7,254.5 Z" fill="none" stroke="#007960" stroke-width="1.8" stroke-linejoin="round"/><path d="M451.6,255.3 L455.7,251.1" stroke="#007960" stroke-width="1.9" stroke-linecap="round"/></g>
<text x="151" y="286.0" font-size="19.5" fill="#555" font-family="Liberation Serif">A</text>
<text x="177.2" y="283.0" font-size="13.9" fill="#505050" textLength="97.9" lengthAdjust="spacingAndGlyphs" >Compressor Stage</text>
<g transform="translate(0.00,32.60)"><path d="M451.9,247.1 Q455.8,246.9 457.8,244.1 L460.4,241.4 L464.9,246.1 L462.3,248.6 Q459.6,250.6 459.7,254.5 Z" fill="none" stroke="#007960" stroke-width="1.8" stroke-linejoin="round"/><path d="M451.6,255.3 L455.7,251.1" stroke="#007960" stroke-width="1.9" stroke-linecap="round"/></g>
<path d="M151,314.09999999999997 L153.6,304.59999999999997 L157,312.09999999999997 L159.2,306.59999999999997 L162.5,314.59999999999997 L164.6,310.29999999999995 L166.5,311.59999999999997" fill="none" stroke="#666" stroke-width="1.5" />
<text x="178.6" y="313.7" font-size="13.9" fill="#505050" textLength="52.7" lengthAdjust="spacingAndGlyphs" >Optimizer</text>
<g transform="translate(0.00,63.30)"><path d="M451.9,247.1 Q455.8,246.9 457.8,244.1 L460.4,241.4 L464.9,246.1 L462.3,248.6 Q459.6,250.6 459.7,254.5 Z" fill="none" stroke="#007960" stroke-width="1.8" stroke-linejoin="round"/><path d="M451.6,255.3 L455.7,251.1" stroke="#007960" stroke-width="1.9" stroke-linecap="round"/></g>
<path d="M151,346.29999999999995 L153.6,336.79999999999995 L157,344.29999999999995 L159.2,338.79999999999995 L162.5,346.79999999999995 L164.6,342.49999999999994 L166.5,343.79999999999995" fill="none" stroke="#666" stroke-width="1.5" />
<text x="178.6" y="345.9" font-size="13.9" fill="#505050" textLength="95.8" lengthAdjust="spacingAndGlyphs" >Relative Humidity</text>
<text x="277.6" y="345.9" font-size="11" fill="#a0a0a0" font-style="italic" textLength="16.4" lengthAdjust="spacingAndGlyphs" >(%)</text>
<g transform="translate(0.00,95.50)"><path d="M451.9,247.1 Q455.8,246.9 457.8,244.1 L460.4,241.4 L464.9,246.1 L462.3,248.6 Q459.6,250.6 459.7,254.5 Z" fill="none" stroke="#007960" stroke-width="1.8" stroke-linejoin="round"/><path d="M451.6,255.3 L455.7,251.1" stroke="#007960" stroke-width="1.9" stroke-linecap="round"/></g>
<path d="M151,377.59999999999997 L153.6,368.09999999999997 L157,375.59999999999997 L159.2,370.09999999999997 L162.5,378.09999999999997 L164.6,373.79999999999995 L166.5,375.09999999999997" fill="none" stroke="#666" stroke-width="1.5" />
<text x="178.6" y="377.2" font-size="13.9" fill="#505050" textLength="69.4" lengthAdjust="spacingAndGlyphs" >Temperature</text>
<text x="251" y="377.2" font-size="11" fill="#a0a0a0" font-style="italic" textLength="16" lengthAdjust="spacingAndGlyphs" >(°F)</text>
<g transform="translate(0.00,126.80)"><path d="M451.9,247.1 Q455.8,246.9 457.8,244.1 L460.4,241.4 L464.9,246.1 L462.3,248.6 Q459.6,250.6 459.7,254.5 Z" fill="none" stroke="#007960" stroke-width="1.8" stroke-linejoin="round"/><path d="M451.6,255.3 L455.7,251.1" stroke="#007960" stroke-width="1.9" stroke-linecap="round"/></g>
<path d="M151,409.59999999999997 L153.6,400.09999999999997 L157,407.59999999999997 L159.2,402.09999999999997 L162.5,410.09999999999997 L164.6,405.79999999999995 L166.5,407.09999999999997" fill="none" stroke="#666" stroke-width="1.5" />
<text x="178.6" y="409.2" font-size="13.9" fill="#505050" textLength="47.8" lengthAdjust="spacingAndGlyphs" >Wet Bulb</text>
<text x="229.6" y="409.2" font-size="11" fill="#a0a0a0" font-style="italic" textLength="16.4" lengthAdjust="spacingAndGlyphs" >(°F)</text>
<g transform="translate(0.00,158.80)"><path d="M451.9,247.1 Q455.8,246.9 457.8,244.1 L460.4,241.4 L464.9,246.1 L462.3,248.6 Q459.6,250.6 459.7,254.5 Z" fill="none" stroke="#007960" stroke-width="1.8" stroke-linejoin="round"/><path d="M451.6,255.3 L455.7,251.1" stroke="#007960" stroke-width="1.9" stroke-linecap="round"/></g>
<rect x="146" y="263.7" width="324.7" height="2" fill="#dcdcdc" />
<rect x="146" y="295.5" width="324.7" height="2" fill="#dcdcdc" />
<rect x="146" y="327.0" width="324.7" height="2" fill="#dcdcdc" />
<rect x="146" y="359.0" width="324.7" height="2" fill="#dcdcdc" />
<rect x="146" y="390.2" width="324.7" height="2" fill="#dcdcdc" />
<rect x="146" y="422.2" width="324.7" height="2" fill="#dcdcdc" />
<rect x="139" y="198" width="274.8" height="41.8" fill="none" stroke="#ee1c0e" stroke-width="4.4"/>
<rect x="500.5" y="50.2" width="49.5" height="37.2" fill="#007960" rx="5"/>
<path d="M507.6,59 V76.4 H525.6" fill="none" stroke="#ffffff" stroke-width="2" />
<path d="M509.5,73 L512.6,66.5 L515,69.5 L518.6,61.3 L520.8,70.5 L522.6,64.8 L524.3,72.5" fill="none" stroke="#ffffff" stroke-width="1.5" stroke-linejoin="round"/>
<path d="M532.2,66.8 L537.4,72 L542.6,66.8" fill="none" stroke="#e6e6e6" stroke-width="2.4" />
<rect x="556" y="51" width="53.8" height="35.2" fill="#ebebeb" rx="2"/>
<rect x="556" y="51" width="53.8" height="1.5" fill="#dedede" />
<rect x="576.3" y="57.2" width="13.4" height="12.2" fill="none" stroke="#3a3a3a" stroke-width="1.4" rx="1"/>
<rect x="576.3" y="57.2" width="13.4" height="2.8" fill="#3a3a3a" />
<rect x="579.7" y="59.8" width="0.8" height="9.4" fill="#777" />
<rect x="583" y="59.8" width="0.8" height="9.4" fill="#777" />
<rect x="586.3" y="59.8" width="0.8" height="9.4" fill="#777" />
<rect x="576.5" y="62.4" width="13" height="0.8" fill="#777" />
<rect x="576.5" y="65.4" width="13" height="0.8" fill="#777" />
<rect x="578.7" y="54.6" width="1.8" height="3.8" fill="#3a3a3a" />
<rect x="585.5" y="54.6" width="1.8" height="3.8" fill="#3a3a3a" />
<ellipse cx="628.3" cy="58.3" rx="3.6" ry="2.5" transform="rotate(45 628.3 58.3)" fill="none" stroke="#333" stroke-width="1.8"/>
<ellipse cx="634.1" cy="64.5" rx="3.6" ry="2.5" transform="rotate(45 634.1 64.5)" fill="none" stroke="#333" stroke-width="1.8"/>
<path d="M630.2,60.4 L632.2,62.4" fill="none" stroke="#333333" stroke-width="1.8" />
<rect x="669.2" y="57.2" width="15" height="2.8" fill="#333" rx="0.6"/>
<rect x="669.2" y="61.5" width="15" height="2.8" fill="#333" rx="0.6"/>
<rect x="669.2" y="65.8" width="15" height="2.8" fill="#333" rx="0.6"/>
<rect x="679" y="57.8" width="4.6" height="1.5" fill="#c4c4c4" />
<rect x="675" y="62.1" width="8.6" height="1.5" fill="#c4c4c4" />
<rect x="677" y="66.4" width="6.6" height="1.5" fill="#c4c4c4" />
<rect x="708.5" y="50" width="1" height="37" fill="#e0e0e0" />
<rect x="930.4" y="50" width="1" height="37" fill="#e0e0e0" />
<rect x="994.5" y="50" width="1" height="37" fill="#e0e0e0" />
<path d="M732.8,70.6 V58" fill="none" stroke="#333333" stroke-width="2.1" />
<path d="M730,59.3 L732.8,55.6 L735.6,59.3 Z" fill="#333333" />
<path d="M738.5,55.8 V68.4" fill="none" stroke="#333333" stroke-width="2.1" />
<path d="M735.7,67.1 L738.5,70.8 L741.3,67.1 Z" fill="#333333" />
<path d="M743.6,56.5 V69 H760.1" fill="none" stroke="#888" stroke-width="1.3" />
<path d="M745.9,66.6 L749.9,62.5 L752.4,64.6 L757.1,59.5" fill="none" stroke="#333333" stroke-width="1.8" />
<path d="M754.6,58.2 L759.0,57.4 L758.2,61.6 Z" fill="#333333" />
<path d="M790.5,70.6 V58" fill="none" stroke="#333333" stroke-width="2.1" />
<path d="M787.7,59.3 L790.5,55.6 L793.3000000000001,59.3 Z" fill="#333333" />
<path d="M796.2,55.8 V68.4" fill="none" stroke="#333333" stroke-width="2.1" />
<path d="M793.4000000000001,67.1 L796.2,70.8 L799.0,67.1 Z" fill="#333333" />
<path d="M801.3000000000001,56.5 V69 H817.8000000000001" fill="none" stroke="#888" stroke-width="1.3" />
<path d="M803.6,66.6 L807.6,62.5 L810.1,64.6 L814.8000000000001,59.5" fill="none" stroke="#333333" stroke-width="1.8" />
<path d="M812.3000000000001,58.2 L816.7,57.4 L815.9000000000001,61.6 Z" fill="#333333" />
<path d="M847.1999999999999,57.5 V68.6" fill="none" stroke="#333333" stroke-width="2.1" />
<path d="M844.4,58.2 L847.1999999999999,54.5 L850.0,58.2 Z" fill="#333333" />
<path d="M844.4,67.9 L847.1999999999999,71.6 L850.0,67.9 Z" fill="#333333" />
<path d="M853.5,56.5 V69 H870.0" fill="none" stroke="#888" stroke-width="1.3" />
<path d="M855.8,66.6 L859.8,62.5 L862.3,64.6 L867.0,59.5" fill="none" stroke="#333333" stroke-width="1.8" />
<path d="M864.5,58.2 L868.9,57.4 L868.1,61.6 Z" fill="#333333" />
<path d="M890.6,56.2 H896.5 L904,63.7 L898.2,69.4 L890.6,61.9 Z" fill="#333333" stroke="#333" stroke-width="0.8" stroke-linejoin="round"/>
<circle cx="893.5" cy="59" r="1.2" fill="#f4f4f4"/>
<path d="M905.8,63.2 H911 L908.4,66 Z" fill="#333333" />
<path d="M948.7,65.7 L952,55.5 L954.8,63.5 L956.8,58.8" fill="none" stroke="#333333" stroke-width="1.8" />
<rect x="957.6" y="60.3" width="1.1" height="1.1" fill="#555" />
<rect x="958.2" y="63" width="1.1" height="1.1" fill="#555" />
<rect x="959.8" y="65.5" width="1.1" height="1.1" fill="#555" />
<rect x="957.8" y="67.2" width="1.1" height="1.1" fill="#555" />
<rect x="961.5" y="64.4" width="1.1" height="1.1" fill="#555" />
<rect x="963.3" y="66.6" width="1.1" height="1.1" fill="#555" />
<path d="M966,63.9 H971.2 L968.6,66.7 Z" fill="#333333" />
<circle cx="1015.9" cy="61.4" r="5.3" fill="none" stroke="#acacac" stroke-width="1.5"/>
<path d="M1019.8,65.3 L1023.6,69.2" fill="none" stroke="#acacac" stroke-width="2" />
<path d="M1013.3,61.4 H1018.5 M1015.9,58.8 V64" fill="none" stroke="#acacac" stroke-width="1" />
<path d="M1047.5,60 H1045.6 V67.6 H1058.6 V60 H1056.6" fill="none" stroke="#333333" stroke-width="1.6" />
<path d="M1052.1,65 V58" fill="none" stroke="#333333" stroke-width="2" />
<path d="M1048.6,58.8 L1052.1,55 L1055.6,58.8 Z" fill="#333333" />
<path d="M1060.8,63.9 H1066 L1063.4,66.7 Z" fill="#333333" />
<path d="M1101.6,55.6 C1106,55.6 1108.9,57.9 1108.9,60.7 C1108.9,63.5 1106,65.6 1101.6,65.6 C1100.6,65.6 1099.7,65.5 1098.9,65.3 L1095,67 L1096.4,64.3 C1095,63.4 1094.3,62.1 1094.3,60.7 C1094.3,57.9 1097.2,55.6 1101.6,55.6 Z" fill="none" stroke="#b4b4b4" stroke-width="1.2" />
<rect x="1098.4" y="60.1" width="1.2" height="1.2" fill="#b4b4b4" />
<rect x="1101.0" y="60.1" width="1.2" height="1.2" fill="#b4b4b4" />
<rect x="1103.6000000000001" y="60.1" width="1.2" height="1.2" fill="#b4b4b4" />
<text x="564.2" y="80.5" font-size="10.6" fill="#4a4a4a" textLength="37.3" lengthAdjust="spacingAndGlyphs" >Calendar</text>
<text x="618.8" y="80.5" font-size="10.6" fill="#4a4a4a" textLength="24" lengthAdjust="spacingAndGlyphs" >Chain</text>
<text x="660" y="80.5" font-size="10.6" fill="#4a4a4a" textLength="33" lengthAdjust="spacingAndGlyphs" >Capsule</text>
<text x="724" y="80.5" font-size="10.6" fill="#4a4a4a" textLength="40" lengthAdjust="spacingAndGlyphs" >One Lane</text>
<text x="781" y="80.5" font-size="10.6" fill="#4a4a4a" textLength="42.7" lengthAdjust="spacingAndGlyphs" >One Y-Axis</text>
<text x="841" y="80.5" font-size="10.6" fill="#4a4a4a" textLength="29" lengthAdjust="spacingAndGlyphs" >Spread</text>
<text x="887.9" y="80.5" font-size="10.6" fill="#4a4a4a" textLength="26.7" lengthAdjust="spacingAndGlyphs" >Labels</text>
<text x="941" y="80.5" font-size="10.6" fill="#4a4a4a" textLength="37.8" lengthAdjust="spacingAndGlyphs" >Dimming</text>
<text x="1005" y="80.5" font-size="10.6" fill="#b0b0b0" textLength="24" lengthAdjust="spacingAndGlyphs" >Zoom</text>
<text x="1042.5" y="80.5" font-size="10.6" fill="#4a4a4a" textLength="26.5" lengthAdjust="spacingAndGlyphs" >Export</text>
<text x="1082" y="80.5" font-size="10.6" fill="#b0b0b0" textLength="38" lengthAdjust="spacingAndGlyphs" >Annotate</text>
<rect x="500.5" y="50.2" width="49.5" height="37.2" fill="#007960" rx="5"/>
<path d="M507.6,59 V76.4 H525.6" fill="none" stroke="#ffffff" stroke-width="2" />
<path d="M509.5,73 L512.6,66.5 L515,69.5 L518.6,61.3 L520.8,70.5 L522.6,64.8 L524.3,72.5" fill="none" stroke="#ffffff" stroke-width="1.5" stroke-linejoin="round"/>
<path d="M532.2,66.8 L537.4,72 L542.6,66.8" fill="none" stroke="#e6e6e6" stroke-width="2.4" />
<rect x="556" y="51" width="53.8" height="35.2" fill="#ebebeb" rx="2"/>
<rect x="556" y="51" width="53.8" height="1.5" fill="#dedede" />
<rect x="576.3" y="57.2" width="13.4" height="12.2" fill="none" stroke="#3a3a3a" stroke-width="1.4" rx="1"/>
<rect x="576.3" y="57.2" width="13.4" height="2.8" fill="#3a3a3a" />
<rect x="579.7" y="59.8" width="0.8" height="9.4" fill="#777" />
<rect x="583" y="59.8" width="0.8" height="9.4" fill="#777" />
<rect x="586.3" y="59.8" width="0.8" height="9.4" fill="#777" />
<rect x="576.5" y="62.4" width="13" height="0.8" fill="#777" />
<rect x="576.5" y="65.4" width="13" height="0.8" fill="#777" />
<rect x="578.7" y="54.6" width="1.8" height="3.8" fill="#3a3a3a" />
<rect x="585.5" y="54.6" width="1.8" height="3.8" fill="#3a3a3a" />
<ellipse cx="628.3" cy="58.3" rx="3.6" ry="2.5" transform="rotate(45 628.3 58.3)" fill="none" stroke="#333" stroke-width="1.8"/>
<ellipse cx="634.1" cy="64.5" rx="3.6" ry="2.5" transform="rotate(45 634.1 64.5)" fill="none" stroke="#333" stroke-width="1.8"/>
<path d="M630.2,60.4 L632.2,62.4" fill="none" stroke="#333333" stroke-width="1.8" />
<rect x="669.2" y="57.2" width="15" height="2.8" fill="#333" rx="0.6"/>
<rect x="669.2" y="61.5" width="15" height="2.8" fill="#333" rx="0.6"/>
<rect x="669.2" y="65.8" width="15" height="2.8" fill="#333" rx="0.6"/>
<rect x="679" y="57.8" width="4.6" height="1.5" fill="#c4c4c4" />
<rect x="675" y="62.1" width="8.6" height="1.5" fill="#c4c4c4" />
<rect x="677" y="66.4" width="6.6" height="1.5" fill="#c4c4c4" />
<rect x="708.5" y="50" width="1" height="37" fill="#e0e0e0" />
<rect x="930.4" y="50" width="1" height="37" fill="#e0e0e0" />
<rect x="994.5" y="50" width="1" height="37" fill="#e0e0e0" />
<path d="M732.8,70.6 V58" fill="none" stroke="#333333" stroke-width="2.1" />
<path d="M730,59.3 L732.8,55.6 L735.6,59.3 Z" fill="#333333" />
<path d="M738.5,55.8 V68.4" fill="none" stroke="#333333" stroke-width="2.1" />
<path d="M735.7,67.1 L738.5,70.8 L741.3,67.1 Z" fill="#333333" />
<path d="M743.6,56.5 V69 H760.1" fill="none" stroke="#888" stroke-width="1.3" />
<path d="M745.9,66.6 L749.9,62.5 L752.4,64.6 L757.1,59.5" fill="none" stroke="#333333" stroke-width="1.8" />
<path d="M754.6,58.2 L759.0,57.4 L758.2,61.6 Z" fill="#333333" />
<path d="M790.5,70.6 V58" fill="none" stroke="#333333" stroke-width="2.1" />
<path d="M787.7,59.3 L790.5,55.6 L793.3000000000001,59.3 Z" fill="#333333" />
<path d="M796.2,55.8 V68.4" fill="none" stroke="#333333" stroke-width="2.1" />
<path d="M793.4000000000001,67.1 L796.2,70.8 L799.0,67.1 Z" fill="#333333" />
<path d="M801.3000000000001,56.5 V69 H817.8000000000001" fill="none" stroke="#888" stroke-width="1.3" />
<path d="M803.6,66.6 L807.6,62.5 L810.1,64.6 L814.8000000000001,59.5" fill="none" stroke="#333333" stroke-width="1.8" />
<path d="M812.3000000000001,58.2 L816.7,57.4 L815.9000000000001,61.6 Z" fill="#333333" />
<path d="M847.1999999999999,57.5 V68.6" fill="none" stroke="#333333" stroke-width="2.1" />
<path d="M844.4,58.2 L847.1999999999999,54.5 L850.0,58.2 Z" fill="#333333" />
<path d="M844.4,67.9 L847.1999999999999,71.6 L850.0,67.9 Z" fill="#333333" />
<path d="M853.5,56.5 V69 H870.0" fill="none" stroke="#888" stroke-width="1.3" />
<path d="M855.8,66.6 L859.8,62.5 L862.3,64.6 L867.0,59.5" fill="none" stroke="#333333" stroke-width="1.8" />
<path d="M864.5,58.2 L868.9,57.4 L868.1,61.6 Z" fill="#333333" />
<path d="M890.6,56.2 H896.5 L904,63.7 L898.2,69.4 L890.6,61.9 Z" fill="#333333" stroke="#333" stroke-width="0.8" stroke-linejoin="round"/>
<circle cx="893.5" cy="59" r="1.2" fill="#f4f4f4"/>
<path d="M905.8,63.2 H911 L908.4,66 Z" fill="#333333" />
<path d="M948.7,65.7 L952,55.5 L954.8,63.5 L956.8,58.8" fill="none" stroke="#333333" stroke-width="1.8" />
<rect x="957.6" y="60.3" width="1.1" height="1.1" fill="#555" />
<rect x="958.2" y="63" width="1.1" height="1.1" fill="#555" />
<rect x="959.8" y="65.5" width="1.1" height="1.1" fill="#555" />
<rect x="957.8" y="67.2" width="1.1" height="1.1" fill="#555" />
<rect x="961.5" y="64.4" width="1.1" height="1.1" fill="#555" />
<rect x="963.3" y="66.6" width="1.1" height="1.1" fill="#555" />
<path d="M966,63.9 H971.2 L968.6,66.7 Z" fill="#333333" />
<circle cx="1015.9" cy="61.4" r="5.3" fill="none" stroke="#acacac" stroke-width="1.5"/>
<path d="M1019.8,65.3 L1023.6,69.2" fill="none" stroke="#acacac" stroke-width="2" />
<path d="M1013.3,61.4 H1018.5 M1015.9,58.8 V64" fill="none" stroke="#acacac" stroke-width="1" />
<path d="M1047.5,60 H1045.6 V67.6 H1058.6 V60 H1056.6" fill="none" stroke="#333333" stroke-width="1.6" />
<path d="M1052.1,65 V58" fill="none" stroke="#333333" stroke-width="2" />
<path d="M1048.6,58.8 L1052.1,55 L1055.6,58.8 Z" fill="#333333" />
<path d="M1060.8,63.9 H1066 L1063.4,66.7 Z" fill="#333333" />
<path d="M1101.6,55.6 C1106,55.6 1108.9,57.9 1108.9,60.7 C1108.9,63.5 1106,65.6 1101.6,65.6 C1100.6,65.6 1099.7,65.5 1098.9,65.3 L1095,67 L1096.4,64.3 C1095,63.4 1094.3,62.1 1094.3,60.7 C1094.3,57.9 1097.2,55.6 1101.6,55.6 Z" fill="none" stroke="#b4b4b4" stroke-width="1.2" />
<rect x="1098.4" y="60.1" width="1.2" height="1.2" fill="#b4b4b4" />
<rect x="1101.0" y="60.1" width="1.2" height="1.2" fill="#b4b4b4" />
<rect x="1103.6000000000001" y="60.1" width="1.2" height="1.2" fill="#b4b4b4" />
<text x="564.2" y="80.5" font-size="10.6" fill="#4a4a4a" textLength="37.3" lengthAdjust="spacingAndGlyphs" >Calendar</text>
<text x="618.8" y="80.5" font-size="10.6" fill="#4a4a4a" textLength="24" lengthAdjust="spacingAndGlyphs" >Chain</text>
<text x="660" y="80.5" font-size="10.6" fill="#4a4a4a" textLength="33" lengthAdjust="spacingAndGlyphs" >Capsule</text>
<text x="724" y="80.5" font-size="10.6" fill="#4a4a4a" textLength="40" lengthAdjust="spacingAndGlyphs" >One Lane</text>
<text x="781" y="80.5" font-size="10.6" fill="#4a4a4a" textLength="42.7" lengthAdjust="spacingAndGlyphs" >One Y-Axis</text>
<text x="841" y="80.5" font-size="10.6" fill="#4a4a4a" textLength="29" lengthAdjust="spacingAndGlyphs" >Spread</text>
<text x="887.9" y="80.5" font-size="10.6" fill="#4a4a4a" textLength="26.7" lengthAdjust="spacingAndGlyphs" >Labels</text>
<text x="941" y="80.5" font-size="10.6" fill="#4a4a4a" textLength="37.8" lengthAdjust="spacingAndGlyphs" >Dimming</text>
<text x="1005" y="80.5" font-size="10.6" fill="#b0b0b0" textLength="24" lengthAdjust="spacingAndGlyphs" >Zoom</text>
<text x="1042.5" y="80.5" font-size="10.6" fill="#4a4a4a" textLength="26.5" lengthAdjust="spacingAndGlyphs" >Export</text>
<text x="1082" y="80.5" font-size="10.6" fill="#b0b0b0" textLength="38" lengthAdjust="spacingAndGlyphs" >Annotate</text>
<rect x="585.7" y="109.5" width="211.3" height="6.2" fill="#69b04b" />
<rect x="1073.3" y="109.5" width="50.9" height="6.2" fill="#69b04b" />
<rect x="1124.2" y="103.6" width="27.8" height="5.9" fill="#7030a0" />
<rect x="1152" y="109.5" width="14" height="6.2" fill="#69b04b" />
<rect x="1166" y="103.6" width="101.4" height="5.9" fill="#7030a0" />
<rect x="1267.4" y="109.5" width="99" height="6.2" fill="#69b04b" />
<rect x="1591.4" y="109.5" width="222.2" height="6.2" fill="#69b04b" />
<rect x="514.1" y="115.7" width="1.5" height="495.5" fill="#8e9bd0" />
<text x="509.8" y="135.8" font-size="12.4" fill="#7280bd" text-anchor="end" textLength="18.6" lengthAdjust="spacingAndGlyphs" >115</text>
<text x="509.8" y="190.9" font-size="12.4" fill="#7280bd" text-anchor="end" textLength="18.6" lengthAdjust="spacingAndGlyphs" >110</text>
<text x="509.8" y="246.0" font-size="12.4" fill="#7280bd" text-anchor="end" textLength="18.6" lengthAdjust="spacingAndGlyphs" >105</text>
<text x="509.8" y="301.1" font-size="12.4" fill="#7280bd" text-anchor="end" textLength="18.6" lengthAdjust="spacingAndGlyphs" >100</text>
<text x="509.8" y="356.2" font-size="12.4" fill="#7280bd" text-anchor="end" textLength="12.4" lengthAdjust="spacingAndGlyphs" >95</text>
<text x="509.8" y="411.3" font-size="12.4" fill="#7280bd" text-anchor="end" textLength="12.4" lengthAdjust="spacingAndGlyphs" >90</text>
<text x="509.8" y="466.40000000000003" font-size="12.4" fill="#7280bd" text-anchor="end" textLength="12.4" lengthAdjust="spacingAndGlyphs" >85</text>
<text x="509.8" y="521.5" font-size="12.4" fill="#7280bd" text-anchor="end" textLength="12.4" lengthAdjust="spacingAndGlyphs" >80</text>
<text x="509.8" y="576.5999999999999" font-size="12.4" fill="#7280bd" text-anchor="end" textLength="12.4" lengthAdjust="spacingAndGlyphs" >75</text>
<rect x="515" y="610.5" width="1516" height="1.2" fill="#dde2ee" />
<rect x="583.2821833333334" y="611" width="1" height="3" fill="#e8ebf3" />
<text x="583.7821833333334" y="631" font-size="12" fill="#7a7a7a" text-anchor="middle" >4:00 pm</text>
<rect x="667.5044055555555" y="611" width="1" height="3" fill="#e8ebf3" />
<text x="668.0044055555555" y="631" font-size="12" fill="#7a7a7a" text-anchor="middle" >8:00 pm</text>
<rect x="751.7266277777778" y="611" width="1" height="3" fill="#e8ebf3" />
<text x="752.2266277777778" y="631" font-size="12" fill="#7a7a7a" text-anchor="middle" >Nov 28</text>
<rect x="835.94885" y="611" width="1" height="3" fill="#e8ebf3" />
<text x="836.44885" y="631" font-size="12" fill="#7a7a7a" text-anchor="middle" >4:00 am</text>
<rect x="920.1710722222223" y="611" width="1" height="3" fill="#e8ebf3" />
<text x="920.6710722222223" y="631" font-size="12" fill="#7a7a7a" text-anchor="middle" >8:00 am</text>
<rect x="1004.3932944444446" y="611" width="1" height="3" fill="#e8ebf3" />
<text x="1004.8932944444446" y="631" font-size="12" fill="#7a7a7a" text-anchor="middle" >12:00 pm</text>
<rect x="1088.6155166666667" y="611" width="1" height="3" fill="#e8ebf3" />
<text x="1089.1155166666667" y="631" font-size="12" fill="#7a7a7a" text-anchor="middle" >4:00 pm</text>
<rect x="1172.837738888889" y="611" width="1" height="3" fill="#e8ebf3" />
<text x="1173.337738888889" y="631" font-size="12" fill="#7a7a7a" text-anchor="middle" >8:00 pm</text>
<rect x="1257.059961111111" y="611" width="1" height="3" fill="#e8ebf3" />
<text x="1257.559961111111" y="631" font-size="12" fill="#7a7a7a" text-anchor="middle" >Nov 29</text>
<rect x="1341.2821833333333" y="611" width="1" height="3" fill="#e8ebf3" />
<text x="1341.7821833333333" y="631" font-size="12" fill="#7a7a7a" text-anchor="middle" >4:00 am</text>
<rect x="1425.5044055555556" y="611" width="1" height="3" fill="#e8ebf3" />
<text x="1426.0044055555556" y="631" font-size="12" fill="#7a7a7a" text-anchor="middle" >8:00 am</text>
<rect x="1509.7266277777778" y="611" width="1" height="3" fill="#e8ebf3" />
<text x="1510.2266277777778" y="631" font-size="12" fill="#7a7a7a" text-anchor="middle" >12:00 pm</text>
<rect x="1593.94885" y="611" width="1" height="3" fill="#e8ebf3" />
<text x="1594.44885" y="631" font-size="12" fill="#7a7a7a" text-anchor="middle" >4:00 pm</text>
<rect x="1678.1710722222224" y="611" width="1" height="3" fill="#e8ebf3" />
<text x="1678.6710722222224" y="631" font-size="12" fill="#7a7a7a" text-anchor="middle" >8:00 pm</text>
<rect x="1762.3932944444446" y="611" width="1" height="3" fill="#e8ebf3" />
<text x="1762.8932944444446" y="631" font-size="12" fill="#7a7a7a" text-anchor="middle" >Nov 30</text>
<rect x="1846.6155166666667" y="611" width="1" height="3" fill="#e8ebf3" />
<text x="1847.1155166666667" y="631" font-size="12" fill="#7a7a7a" text-anchor="middle" >4:00 am</text>
<rect x="1930.837738888889" y="611" width="1" height="3" fill="#e8ebf3" />
<text x="1931.337738888889" y="631" font-size="12" fill="#7a7a7a" text-anchor="middle" >8:00 am</text>
<rect x="2015.0599611111113" y="611" width="1" height="3" fill="#e8ebf3" />
<text x="2006.5" y="631" font-size="12" fill="#7a7a7a" text-anchor="middle" >12:00 pm</text>
<path d="M515.1,562.4 L517.0,563.1 L519.6,565.7 L522.8,567.5 L524.7,566.0 L526.0,557.0 L527.3,546.8 L529.2,535.3 L530.5,526.3 L532.6,515.1 L536.6,513.8 L539.2,512.5 L541.9,508.5 L545.9,505.8 L549.9,485.9 L552.5,484.6 L556.5,472.6 L559.2,471.3 L563.1,458.0 L565.8,454.0 L569.8,440.7 L572.5,438.1 L575.1,428.8 L580.4,422.6 L585.7,406.2 L591.1,388.9 L593.7,374.3 L596.4,365.0 L597.7,370.3 L600.4,366.3 L603.0,369.0 L605.7,359.7 L608.3,345.0 L611.0,343.7 L614.2,331.8 L616.3,335.7 L619.0,334.4 L621.1,325.1 L623.7,330.4 L625.6,322.5 L629.6,321.1 L630.9,311.8 L633.6,303.1 L636.2,309.2 L638.9,315.8 L641.5,315.8 L643.7,313.1 L645.5,316.3 L648.2,314.5 L650.8,316.3 L654.8,297.2 L657.5,306.5 L660.1,303.8 L662.8,333.1 L666.8,303.8 L670.8,298.5 L673.4,319.8 L676.1,317.1 L680.1,302.5 L682.2,311.8 L685.4,289.2 L688.6,282.6 L690.7,293.2 L693.4,301.2 L697.4,281.3 L700.0,293.2 L702.7,294.5 L705.3,302.5 L706.7,298.5 L708.8,330.4 L712.0,299.9 L714.6,301.2 L716.8,286.6 L718.6,298.5 L721.3,294.5 L723.1,297.2 L725.8,290.6 L727.9,298.5 L730.0,305.2 L731.9,301.2 L733.2,305.2 L735.4,297.2 L737.2,329.1 L739.9,309.2 L741.7,313.1 L743.3,309.2 L745.2,315.8 L749.2,318.5 L751.8,321.1 L754.5,331.2 L758.5,321.1 L761.1,313.1 L763.8,317.1 L766.4,335.7 L769.1,338.4 L772.6,337.1 L775.3,340.7 L777.4,349.5 L780.3,355.4 L783.3,368.7 L786.2,379.1 L790.7,393.8 L795.1,402.7 L799.5,416.0 L802.5,421.0 L804.8,422.8 L808.4,430.7 L811.3,435.2 L814.3,438.7 L817.2,439.6 L819.6,443.4 L823.1,442.5 L826.1,445.5 L830.5,455.8 L835.0,458.2 L839.4,461.7 L842.3,466.2 L846.8,471.2 L851.2,479.4 L855.6,481.8 L858.6,485.4 L864.5,486.8 L868.9,491.3 L873.3,491.9 L876.3,496.6 L879.3,495.7 L882.2,492.7 L885.7,496.6 L891.1,510.5 L895.5,520.8 L898.4,521.4 L901.4,523.7 L905.8,521.4 L910.3,521.4 L914.7,528.2 L920.6,540.9 L923.5,542.9 L926.5,543.8 L930.9,546.8 L933.9,550.9 L938.3,549.7 L941.3,552.7 L944.2,555.6 L947.2,543.8 L951.6,535.6 L954.5,540.9 L958.4,549.7 L963.4,556.2 L967.8,559.2 L970.8,556.8 L976.7,556.8 L981.1,554.7 L985.6,563.6 L990.0,573.3 L994.4,576.3 L997.4,573.3 L1001.8,574.5 L1006.2,571.6 L1012.1,573.3 L1016.6,581.3 L1021.0,587.2 L1026.9,594.0 L1031.3,587.2 L1034.3,578.4 L1037.2,567.4 L1040.2,556.2 L1043.1,551.8 L1046.1,544.4 L1050.5,535.6 L1052.9,520.8 L1055.8,485.4 L1056.8,480.0 L1058.3,458.6 L1060.2,447.6 L1061.5,436.5 L1063.4,423.1 L1065.4,422.4 L1067.8,428.7 L1070.2,414.5 L1071.7,410.6 L1073.3,411.3 L1074.4,398.7 L1076.5,383.0 L1078.8,373.5 L1080.4,359.4 L1082.6,337.3 L1084.9,316.9 L1087.2,301.1 L1089.4,288.7 L1091.7,286.4 L1094.0,313.6 L1096.2,301.1 L1098.0,302.2 L1100.3,283.0 L1101.9,312.4 L1103.5,306.8 L1105.3,330.5 L1107.1,319.2 L1108.7,331.7 L1111.6,323.7 L1114.3,298.8 L1117.7,288.7 L1120.0,268.3 L1121.6,275.1 L1124.5,240.0 L1126.8,217.3 L1129.0,210.6 L1131.3,199.2 L1134.7,195.8 L1138.1,198.1 L1141.0,185.6 L1143.3,233.2 L1144.9,270.5 L1147.2,237.7 L1149.0,221.9 L1150.6,227.5 L1152.4,255.8 L1153.9,288.7 L1155.8,277.3 L1157.8,283.0 L1160.7,322.6 L1163.7,292.0 L1166.4,228.7 L1168.7,203.8 L1170.5,195.8 L1172.1,198.1 L1174.3,174.3 L1176.1,160.7 L1177.7,178.9 L1180.0,259.2 L1182.2,219.6 L1185.2,181.1 L1187.2,190.2 L1189.0,184.5 L1190.8,206.0 L1192.4,187.9 L1195.4,156.2 L1197.0,151.7 L1199.2,131.8 L1200.8,147.2 L1203.1,197.0 L1204.9,210.6 L1206.7,212.8 L1208.3,208.3 L1210.5,209.4 L1212.8,199.2 L1216.2,186.8 L1218.0,192.4 L1219.6,189.7 L1221.2,192.0 L1223.0,187.5 L1224.8,206.0 L1226.6,221.9 L1229.3,200.4 L1231.6,197.0 L1234.3,192.9 L1236.6,197.0 L1238.8,209.4 L1242.2,215.1 L1245.6,220.7 L1248.3,225.3 L1252.0,217.8 L1254.7,218.5 L1258.8,224.1 L1261.0,238.8 L1263.7,234.3 L1266.5,238.8 L1269.4,260.4 L1271.7,276.2 L1273.9,286.4 L1276.2,300.0 L1279.6,305.6 L1282.3,314.7 L1284.6,311.3 L1285.5,310.5 L1287.7,317.1 L1290.5,319.3 L1293.2,325.4 L1296.0,327.0 L1298.7,335.8 L1301.5,338.0 L1304.3,345.5 L1307.6,349.6 L1310.9,356.5 L1313.6,357.9 L1316.4,362.0 L1320.0,364.8 L1321.9,362.8 L1324.1,368.3 L1327.4,372.2 L1330.2,373.0 L1332.9,376.6 L1336.5,377.7 L1338.4,373.9 L1342.8,373.9 L1345.6,379.9 L1348.9,377.7 L1352.2,386.8 L1355.8,386.0 L1359.9,384.9 L1364.1,393.7 L1366.0,404.7 L1368.2,418.5 L1370.9,430.9 L1373.7,438.3 L1376.5,440.6 L1378.7,445.5 L1383.3,446.1 L1387.5,451.6 L1393.0,457.6 L1397.1,462.6 L1400.7,468.7 L1404.6,470.3 L1408.1,469.5 L1412.3,474.2 L1416.4,477.8 L1421.9,480.5 L1425.5,486.0 L1430.2,485.2 L1433.0,484.1 L1437.1,486.9 L1442.0,487.4 L1446.7,494.3 L1450.3,497.9 L1454.2,499.0 L1459.1,505.3 L1464.1,507.2 L1468.8,510.8 L1474.3,515.0 L1477.0,518.3 L1481.2,524.6 L1485.3,525.4 L1489.4,524.6 L1493.6,526.0 L1496.9,522.7 L1500.5,525.4 L1504.6,528.2 L1508.2,528.2 L1512.9,531.5 L1517.0,533.7 L1521.1,537.0 L1525.3,541.1 L1528.0,543.1 L1533.0,541.1 L1535.7,523.2 L1539.1,503.9 L1543.2,502.6 L1545.9,497.1 L1548.6,492.4 L1550.7,495.0 L1553.4,491.3 L1557.9,483.9 L1561.9,465.3 L1564.5,462.6 L1568.5,454.6 L1571.2,453.3 L1573.8,448.0 L1577.3,446.1 L1580.0,437.4 L1583.1,432.0 L1585.3,432.8 L1588.5,417.4 L1592.5,402.0 L1595.1,402.8 L1598.6,389.5 L1601.2,398.8 L1603.9,385.5 L1606.5,375.4 L1608.4,377.0 L1611.1,366.9 L1612.9,363.7 L1615.0,367.5 L1617.7,361.1 L1620.4,347.0 L1621.7,345.7 L1623.5,361.6 L1625.1,351.5 L1627.0,376.2 L1629.7,341.7 L1631.5,321.2 L1635.0,320.4 L1636.8,317.8 L1639.0,331.1 L1642.1,309.8 L1644.3,315.1 L1646.9,313.8 L1650.1,340.4 L1652.8,324.4 L1656.2,341.7 L1659.7,304.5 L1662.9,281.9 L1665.5,278.7 L1668.2,297.8 L1670.8,321.8 L1673.5,325.7 L1677.5,348.3 L1680.1,343.0 L1684.1,328.4 L1687.3,331.1 L1690.8,312.5 L1693.4,303.1 L1696.1,299.2 L1699.5,337.7 L1702.7,317.8 L1705.4,292.0 L1708.1,311.1 L1710.2,327.1 L1712.8,326.5 L1715.5,317.8 L1718.7,334.5 L1722.7,348.9 L1726.1,348.3 L1728.8,315.9 L1732.0,293.8 L1736.8,281.9 L1739.9,299.2 L1742.6,295.2 L1746.6,303.1 L1748.4,301.8 L1750.6,288.5 L1753.2,296.5 L1757.2,288.5 L1761.2,320.4 L1766.0,313.8 L1770.5,315.9 L1774.5,327.1 L1779.8,347.0 L1783.8,351.0 L1787.8,355.0 L1792.6,366.9 L1796.2,374.6 L1799.8,384.4 L1802.3,391.8 L1806.0,398.0 L1809.7,402.9 L1813.4,407.8 L1817.1,409.5 L1820.8,414.5 L1823.2,415.9 L1826.9,420.1 L1833.1,421.4 L1836.8,425.0 L1839.2,426.8 L1842.9,427.5 L1846.6,430.0 L1851.5,433.7 L1854.5,438.1 L1857.7,439.1 L1861.4,444.0 L1865.0,446.5 L1868.7,450.4 L1872.4,452.1 L1874.9,452.1 L1878.6,455.3 L1882.3,458.8 L1887.2,461.2 L1890.9,463.7 L1893.3,463.2 L1897.0,463.7 L1900.2,463.7 L1903.2,468.1 L1906.9,468.6 L1910.6,468.6 L1914.3,472.5 L1918.0,475.0 L1920.9,479.2 L1924.8,484.1 L1929.0,485.3 L1935.2,485.3 L1940.6,486.6 L1943.8,489.8 L1947.5,492.7 L1950.4,497.6 L1954.9,498.9 L1959.8,497.6 L1963.5,499.6 L1967.2,503.1 L1972.1,504.5 L1974.5,503.8 L1979.5,506.2 L1984.4,511.2 L1989.3,513.6 L1994.2,514.9 L2000.4,515.4 L2004.1,518.6 L2008.5,522.7 L2012.7,523.5 L2016.4,524.2 L2020.1,526.7 L2026.2,527.7 L2031.1,530.1" fill="none" stroke="#7383c4" stroke-width="1.4" stroke-linejoin="round"/>
<path d="M502.5,638.5 V650" fill="none" stroke="#1f7d66" stroke-width="2.2" />
<path d="M497.6,645.5 L502.5,651.8 L507.4,645.5 Z" fill="#1f7d66" />
<text x="515.4" y="650.4" font-size="11.9" fill="#1f7d66" textLength="101.6" lengthAdjust="spacingAndGlyphs" >11/27/2018 12:44 PM</text>
<text x="620.5" y="650.4" font-size="11.9" fill="#1f7d66" textLength="18.5" lengthAdjust="spacingAndGlyphs" >EST</text>
<rect x="620.5" y="652.2" width="18.5" height="0.9" fill="#1f7d66" />
<text x="2009" y="650.4" font-size="11.9" fill="#1f7d66" text-anchor="end" textLength="101.6" lengthAdjust="spacingAndGlyphs" >11/30/2018 12:44 PM</text>
<text x="2012.2" y="650.4" font-size="11.9" fill="#1f7d66" textLength="18.5" lengthAdjust="spacingAndGlyphs" >EST</text>
<rect x="2012.2" y="652.2" width="18.5" height="0.9" fill="#1f7d66" />
<path d="M1152.3,645.5 L1159.3,639.3 V651.7 Z M1158.6,645.5 L1165.6,639.3 V651.7 Z" fill="#1b6e5a" />
<path d="M1181.5,645.5 L1188.5,639.3 V651.7 Z" fill="#1b6e5a" />
<text x="1202.5" y="650.4" font-size="11.9" fill="#1f7d66" textLength="32" lengthAdjust="spacingAndGlyphs" >3 days</text>
<path d="M1256.5,645.5 L1249.5,639.3 V651.7 Z" fill="#1b6e5a" />
<path d="M1279,645.5 L1272,639.3 V651.7 Z M1285.3,645.5 L1278.3,639.3 V651.7 Z" fill="#1b6e5a" />
<path d="M1306,645.5 L1300,639.3 V651.7 Z" fill="#1b6e5a" />
<rect x="1306.5" y="639.3" width="2.4" height="12.4" fill="#1b6e5a" />
<path d="M1335.2,643 A4.3,4.3 0 0 0 1327,644" fill="none" stroke="#1b6e5a" stroke-width="1.8"/>
<path d="M1326.5,648 A4.3,4.3 0 0 0 1334.8,647" fill="none" stroke="#1b6e5a" stroke-width="1.8"/>
<path d="M1336.2,640 V644.5 H1331.8 Z" fill="#1b6e5a" />
<path d="M1325.6,651 V646.5 H1330 Z" fill="#1b6e5a" />
<rect x="585.7" y="109.5" width="211.3" height="6.2" fill="#69b04b" />
<rect x="1073.3" y="109.5" width="50.9" height="6.2" fill="#69b04b" />
<rect x="1124.2" y="103.6" width="27.8" height="5.9" fill="#7030a0" />
<rect x="1152" y="109.5" width="14" height="6.2" fill="#69b04b" />
<rect x="1166" y="103.6" width="101.4" height="5.9" fill="#7030a0" />
<rect x="1267.4" y="109.5" width="99" height="6.2" fill="#69b04b" />
<rect x="1591.4" y="109.5" width="222.2" height="6.2" fill="#69b04b" />
<rect x="514.1" y="115.7" width="1.5" height="495.5" fill="#8e9bd0" />
<text x="509.8" y="135.8" font-size="12.4" fill="#7280bd" text-anchor="end" textLength="18.6" lengthAdjust="spacingAndGlyphs" >115</text>
<text x="509.8" y="190.9" font-size="12.4" fill="#7280bd" text-anchor="end" textLength="18.6" lengthAdjust="spacingAndGlyphs" >110</text>
<text x="509.8" y="246.0" font-size="12.4" fill="#7280bd" text-anchor="end" textLength="18.6" lengthAdjust="spacingAndGlyphs" >105</text>
<text x="509.8" y="301.1" font-size="12.4" fill="#7280bd" text-anchor="end" textLength="18.6" lengthAdjust="spacingAndGlyphs" >100</text>
<text x="509.8" y="356.2" font-size="12.4" fill="#7280bd" text-anchor="end" textLength="12.4" lengthAdjust="spacingAndGlyphs" >95</text>
<text x="509.8" y="411.3" font-size="12.4" fill="#7280bd" text-anchor="end" textLength="12.4" lengthAdjust="spacingAndGlyphs" >90</text>
<text x="509.8" y="466.40000000000003" font-size="12.4" fill="#7280bd" text-anchor="end" textLength="12.4" lengthAdjust="spacingAndGlyphs" >85</text>
<text x="509.8" y="521.5" font-size="12.4" fill="#7280bd" text-anchor="end" textLength="12.4" lengthAdjust="spacingAndGlyphs" >80</text>
<text x="509.8" y="576.5999999999999" font-size="12.4" fill="#7280bd" text-anchor="end" textLength="12.4" lengthAdjust="spacingAndGlyphs" >75</text>
<rect x="515" y="610.5" width="1516" height="1.2" fill="#dde2ee" />
<rect x="583.2821833333334" y="611" width="1" height="3" fill="#e8ebf3" />
<text x="583.7821833333334" y="631" font-size="12" fill="#7a7a7a" text-anchor="middle" >4:00 pm</text>
<rect x="667.5044055555555" y="611" width="1" height="3" fill="#e8ebf3" />
<text x="668.0044055555555" y="631" font-size="12" fill="#7a7a7a" text-anchor="middle" >8:00 pm</text>
<rect x="751.7266277777778" y="611" width="1" height="3" fill="#e8ebf3" />
<text x="752.2266277777778" y="631" font-size="12" fill="#7a7a7a" text-anchor="middle" >Nov 28</text>
<rect x="835.94885" y="611" width="1" height="3" fill="#e8ebf3" />
<text x="836.44885" y="631" font-size="12" fill="#7a7a7a" text-anchor="middle" >4:00 am</text>
<rect x="920.1710722222223" y="611" width="1" height="3" fill="#e8ebf3" />
<text x="920.6710722222223" y="631" font-size="12" fill="#7a7a7a" text-anchor="middle" >8:00 am</text>
<rect x="1004.3932944444446" y="611" width="1" height="3" fill="#e8ebf3" />
<text x="1004.8932944444446" y="631" font-size="12" fill="#7a7a7a" text-anchor="middle" >12:00 pm</text>
<rect x="1088.6155166666667" y="611" width="1" height="3" fill="#e8ebf3" />
<text x="1089.1155166666667" y="631" font-size="12" fill="#7a7a7a" text-anchor="middle" >4:00 pm</text>
<rect x="1172.837738888889" y="611" width="1" height="3" fill="#e8ebf3" />
<text x="1173.337738888889" y="631" font-size="12" fill="#7a7a7a" text-anchor="middle" >8:00 pm</text>
<rect x="1257.059961111111" y="611" width="1" height="3" fill="#e8ebf3" />
<text x="1257.559961111111" y="631" font-size="12" fill="#7a7a7a" text-anchor="middle" >Nov 29</text>
<rect x="1341.2821833333333" y="611" width="1" height="3" fill="#e8ebf3" />
<text x="1341.7821833333333" y="631" font-size="12" fill="#7a7a7a" text-anchor="middle" >4:00 am</text>
<rect x="1425.5044055555556" y="611" width="1" height="3" fill="#e8ebf3" />
<text x="1426.0044055555556" y="631" font-size="12" fill="#7a7a7a" text-anchor="middle" >8:00 am</text>
<rect x="1509.7266277777778" y="611" width="1" height="3" fill="#e8ebf3" />
<text x="1510.2266277777778" y="631" font-size="12" fill="#7a7a7a" text-anchor="middle" >12:00 pm</text>
<rect x="1593.94885" y="611" width="1" height="3" fill="#e8ebf3" />
<text x="1594.44885" y="631" font-size="12" fill="#7a7a7a" text-anchor="middle" >4:00 pm</text>
<rect x="1678.1710722222224" y="611" width="1" height="3" fill="#e8ebf3" />
<text x="1678.6710722222224" y="631" font-size="12" fill="#7a7a7a" text-anchor="middle" >8:00 pm</text>
<rect x="1762.3932944444446" y="611" width="1" height="3" fill="#e8ebf3" />
<text x="1762.8932944444446" y="631" font-size="12" fill="#7a7a7a" text-anchor="middle" >Nov 30</text>
<rect x="1846.6155166666667" y="611" width="1" height="3" fill="#e8ebf3" />
<text x="1847.1155166666667" y="631" font-size="12" fill="#7a7a7a" text-anchor="middle" >4:00 am</text>
<rect x="1930.837738888889" y="611" width="1" height="3" fill="#e8ebf3" />
<text x="1931.337738888889" y="631" font-size="12" fill="#7a7a7a" text-anchor="middle" >8:00 am</text>
<rect x="2015.0599611111113" y="611" width="1" height="3" fill="#e8ebf3" />
<text x="2006.5" y="631" font-size="12" fill="#7a7a7a" text-anchor="middle" >12:00 pm</text>
<path d="M515.1,562.4 L517.0,563.1 L519.6,565.7 L522.8,567.5 L524.7,566.0 L526.0,557.0 L527.3,546.8 L529.2,535.3 L530.5,526.3 L532.6,515.1 L536.6,513.8 L539.2,512.5 L541.9,508.5 L545.9,505.8 L549.9,485.9 L552.5,484.6 L556.5,472.6 L559.2,471.3 L563.1,458.0 L565.8,454.0 L569.8,440.7 L572.5,438.1 L575.1,428.8 L580.4,422.6 L585.7,406.2 L591.1,388.9 L593.7,374.3 L596.4,365.0 L597.7,370.3 L600.4,366.3 L603.0,369.0 L605.7,359.7 L608.3,345.0 L611.0,343.7 L614.2,331.8 L616.3,335.7 L619.0,334.4 L621.1,325.1 L623.7,330.4 L625.6,322.5 L629.6,321.1 L630.9,311.8 L633.6,303.1 L636.2,309.2 L638.9,315.8 L641.5,315.8 L643.7,313.1 L645.5,316.3 L648.2,314.5 L650.8,316.3 L654.8,297.2 L657.5,306.5 L660.1,303.8 L662.8,333.1 L666.8,303.8 L670.8,298.5 L673.4,319.8 L676.1,317.1 L680.1,302.5 L682.2,311.8 L685.4,289.2 L688.6,282.6 L690.7,293.2 L693.4,301.2 L697.4,281.3 L700.0,293.2 L702.7,294.5 L705.3,302.5 L706.7,298.5 L708.8,330.4 L712.0,299.9 L714.6,301.2 L716.8,286.6 L718.6,298.5 L721.3,294.5 L723.1,297.2 L725.8,290.6 L727.9,298.5 L730.0,305.2 L731.9,301.2 L733.2,305.2 L735.4,297.2 L737.2,329.1 L739.9,309.2 L741.7,313.1 L743.3,309.2 L745.2,315.8 L749.2,318.5 L751.8,321.1 L754.5,331.2 L758.5,321.1 L761.1,313.1 L763.8,317.1 L766.4,335.7 L769.1,338.4 L772.6,337.1 L775.3,340.7 L777.4,349.5 L780.3,355.4 L783.3,368.7 L786.2,379.1 L790.7,393.8 L795.1,402.7 L799.5,416.0 L802.5,421.0 L804.8,422.8 L808.4,430.7 L811.3,435.2 L814.3,438.7 L817.2,439.6 L819.6,443.4 L823.1,442.5 L826.1,445.5 L830.5,455.8 L835.0,458.2 L839.4,461.7 L842.3,466.2 L846.8,471.2 L851.2,479.4 L855.6,481.8 L858.6,485.4 L864.5,486.8 L868.9,491.3 L873.3,491.9 L876.3,496.6 L879.3,495.7 L882.2,492.7 L885.7,496.6 L891.1,510.5 L895.5,520.8 L898.4,521.4 L901.4,523.7 L905.8,521.4 L910.3,521.4 L914.7,528.2 L920.6,540.9 L923.5,542.9 L926.5,543.8 L930.9,546.8 L933.9,550.9 L938.3,549.7 L941.3,552.7 L944.2,555.6 L947.2,543.8 L951.6,535.6 L954.5,540.9 L958.4,549.7 L963.4,556.2 L967.8,559.2 L970.8,556.8 L976.7,556.8 L981.1,554.7 L985.6,563.6 L990.0,573.3 L994.4,576.3 L997.4,573.3 L1001.8,574.5 L1006.2,571.6 L1012.1,573.3 L1016.6,581.3 L1021.0,587.2 L1026.9,594.0 L1031.3,587.2 L1034.3,578.4 L1037.2,567.4 L1040.2,556.2 L1043.1,551.8 L1046.1,544.4 L1050.5,535.6 L1052.9,520.8 L1055.8,485.4 L1056.8,480.0 L1058.3,458.6 L1060.2,447.6 L1061.5,436.5 L1063.4,423.1 L1065.4,422.4 L1067.8,428.7 L1070.2,414.5 L1071.7,410.6 L1073.3,411.3 L1074.4,398.7 L1076.5,383.0 L1078.8,373.5 L1080.4,359.4 L1082.6,337.3 L1084.9,316.9 L1087.2,301.1 L1089.4,288.7 L1091.7,286.4 L1094.0,313.6 L1096.2,301.1 L1098.0,302.2 L1100.3,283.0 L1101.9,312.4 L1103.5,306.8 L1105.3,330.5 L1107.1,319.2 L1108.7,331.7 L1111.6,323.7 L1114.3,298.8 L1117.7,288.7 L1120.0,268.3 L1121.6,275.1 L1124.5,240.0 L1126.8,217.3 L1129.0,210.6 L1131.3,199.2 L1134.7,195.8 L1138.1,198.1 L1141.0,185.6 L1143.3,233.2 L1144.9,270.5 L1147.2,237.7 L1149.0,221.9 L1150.6,227.5 L1152.4,255.8 L1153.9,288.7 L1155.8,277.3 L1157.8,283.0 L1160.7,322.6 L1163.7,292.0 L1166.4,228.7 L1168.7,203.8 L1170.5,195.8 L1172.1,198.1 L1174.3,174.3 L1176.1,160.7 L1177.7,178.9 L1180.0,259.2 L1182.2,219.6 L1185.2,181.1 L1187.2,190.2 L1189.0,184.5 L1190.8,206.0 L1192.4,187.9 L1195.4,156.2 L1197.0,151.7 L1199.2,131.8 L1200.8,147.2 L1203.1,197.0 L1204.9,210.6 L1206.7,212.8 L1208.3,208.3 L1210.5,209.4 L1212.8,199.2 L1216.2,186.8 L1218.0,192.4 L1219.6,189.7 L1221.2,192.0 L1223.0,187.5 L1224.8,206.0 L1226.6,221.9 L1229.3,200.4 L1231.6,197.0 L1234.3,192.9 L1236.6,197.0 L1238.8,209.4 L1242.2,215.1 L1245.6,220.7 L1248.3,225.3 L1252.0,217.8 L1254.7,218.5 L1258.8,224.1 L1261.0,238.8 L1263.7,234.3 L1266.5,238.8 L1269.4,260.4 L1271.7,276.2 L1273.9,286.4 L1276.2,300.0 L1279.6,305.6 L1282.3,314.7 L1284.6,311.3 L1285.5,310.5 L1287.7,317.1 L1290.5,319.3 L1293.2,325.4 L1296.0,327.0 L1298.7,335.8 L1301.5,338.0 L1304.3,345.5 L1307.6,349.6 L1310.9,356.5 L1313.6,357.9 L1316.4,362.0 L1320.0,364.8 L1321.9,362.8 L1324.1,368.3 L1327.4,372.2 L1330.2,373.0 L1332.9,376.6 L1336.5,377.7 L1338.4,373.9 L1342.8,373.9 L1345.6,379.9 L1348.9,377.7 L1352.2,386.8 L1355.8,386.0 L1359.9,384.9 L1364.1,393.7 L1366.0,404.7 L1368.2,418.5 L1370.9,430.9 L1373.7,438.3 L1376.5,440.6 L1378.7,445.5 L1383.3,446.1 L1387.5,451.6 L1393.0,457.6 L1397.1,462.6 L1400.7,468.7 L1404.6,470.3 L1408.1,469.5 L1412.3,474.2 L1416.4,477.8 L1421.9,480.5 L1425.5,486.0 L1430.2,485.2 L1433.0,484.1 L1437.1,486.9 L1442.0,487.4 L1446.7,494.3 L1450.3,497.9 L1454.2,499.0 L1459.1,505.3 L1464.1,507.2 L1468.8,510.8 L1474.3,515.0 L1477.0,518.3 L1481.2,524.6 L1485.3,525.4 L1489.4,524.6 L1493.6,526.0 L1496.9,522.7 L1500.5,525.4 L1504.6,528.2 L1508.2,528.2 L1512.9,531.5 L1517.0,533.7 L1521.1,537.0 L1525.3,541.1 L1528.0,543.1 L1533.0,541.1 L1535.7,523.2 L1539.1,503.9 L1543.2,502.6 L1545.9,497.1 L1548.6,492.4 L1550.7,495.0 L1553.4,491.3 L1557.9,483.9 L1561.9,465.3 L1564.5,462.6 L1568.5,454.6 L1571.2,453.3 L1573.8,448.0 L1577.3,446.1 L1580.0,437.4 L1583.1,432.0 L1585.3,432.8 L1588.5,417.4 L1592.5,402.0 L1595.1,402.8 L1598.6,389.5 L1601.2,398.8 L1603.9,385.5 L1606.5,375.4 L1608.4,377.0 L1611.1,366.9 L1612.9,363.7 L1615.0,367.5 L1617.7,361.1 L1620.4,347.0 L1621.7,345.7 L1623.5,361.6 L1625.1,351.5 L1627.0,376.2 L1629.7,341.7 L1631.5,321.2 L1635.0,320.4 L1636.8,317.8 L1639.0,331.1 L1642.1,309.8 L1644.3,315.1 L1646.9,313.8 L1650.1,340.4 L1652.8,324.4 L1656.2,341.7 L1659.7,304.5 L1662.9,281.9 L1665.5,278.7 L1668.2,297.8 L1670.8,321.8 L1673.5,325.7 L1677.5,348.3 L1680.1,343.0 L1684.1,328.4 L1687.3,331.1 L1690.8,312.5 L1693.4,303.1 L1696.1,299.2 L1699.5,337.7 L1702.7,317.8 L1705.4,292.0 L1708.1,311.1 L1710.2,327.1 L1712.8,326.5 L1715.5,317.8 L1718.7,334.5 L1722.7,348.9 L1726.1,348.3 L1728.8,315.9 L1732.0,293.8 L1736.8,281.9 L1739.9,299.2 L1742.6,295.2 L1746.6,303.1 L1748.4,301.8 L1750.6,288.5 L1753.2,296.5 L1757.2,288.5 L1761.2,320.4 L1766.0,313.8 L1770.5,315.9 L1774.5,327.1 L1779.8,347.0 L1783.8,351.0 L1787.8,355.0 L1792.6,366.9 L1796.2,374.6 L1799.8,384.4 L1802.3,391.8 L1806.0,398.0 L1809.7,402.9 L1813.4,407.8 L1817.1,409.5 L1820.8,414.5 L1823.2,415.9 L1826.9,420.1 L1833.1,421.4 L1836.8,425.0 L1839.2,426.8 L1842.9,427.5 L1846.6,430.0 L1851.5,433.7 L1854.5,438.1 L1857.7,439.1 L1861.4,444.0 L1865.0,446.5 L1868.7,450.4 L1872.4,452.1 L1874.9,452.1 L1878.6,455.3 L1882.3,458.8 L1887.2,461.2 L1890.9,463.7 L1893.3,463.2 L1897.0,463.7 L1900.2,463.7 L1903.2,468.1 L1906.9,468.6 L1910.6,468.6 L1914.3,472.5 L1918.0,475.0 L1920.9,479.2 L1924.8,484.1 L1929.0,485.3 L1935.2,485.3 L1940.6,486.6 L1943.8,489.8 L1947.5,492.7 L1950.4,497.6 L1954.9,498.9 L1959.8,497.6 L1963.5,499.6 L1967.2,503.1 L1972.1,504.5 L1974.5,503.8 L1979.5,506.2 L1984.4,511.2 L1989.3,513.6 L1994.2,514.9 L2000.4,515.4 L2004.1,518.6 L2008.5,522.7 L2012.7,523.5 L2016.4,524.2 L2020.1,526.7 L2026.2,527.7 L2031.1,530.1" fill="none" stroke="#7383c4" stroke-width="1.4" stroke-linejoin="round"/>
<path d="M502.5,638.5 V650" fill="none" stroke="#1f7d66" stroke-width="2.2" />
<path d="M497.6,645.5 L502.5,651.8 L507.4,645.5 Z" fill="#1f7d66" />
<text x="515.4" y="650.4" font-size="11.9" fill="#1f7d66" textLength="101.6" lengthAdjust="spacingAndGlyphs" >11/27/2018 12:44 PM</text>
<text x="620.5" y="650.4" font-size="11.9" fill="#1f7d66" textLength="18.5" lengthAdjust="spacingAndGlyphs" >EST</text>
<rect x="620.5" y="652.2" width="18.5" height="0.9" fill="#1f7d66" />
<text x="2009" y="650.4" font-size="11.9" fill="#1f7d66" text-anchor="end" textLength="101.6" lengthAdjust="spacingAndGlyphs" >11/30/2018 12:44 PM</text>
<text x="2012.2" y="650.4" font-size="11.9" fill="#1f7d66" textLength="18.5" lengthAdjust="spacingAndGlyphs" >EST</text>
<rect x="2012.2" y="652.2" width="18.5" height="0.9" fill="#1f7d66" />
<path d="M1152.3,645.5 L1159.3,639.3 V651.7 Z M1158.6,645.5 L1165.6,639.3 V651.7 Z" fill="#1b6e5a" />
<path d="M1181.5,645.5 L1188.5,639.3 V651.7 Z" fill="#1b6e5a" />
<text x="1202.5" y="650.4" font-size="11.9" fill="#1f7d66" textLength="32" lengthAdjust="spacingAndGlyphs" >3 days</text>
<path d="M1256.5,645.5 L1249.5,639.3 V651.7 Z" fill="#1b6e5a" />
<path d="M1279,645.5 L1272,639.3 V651.7 Z M1285.3,645.5 L1278.3,639.3 V651.7 Z" fill="#1b6e5a" />
<path d="M1306,645.5 L1300,639.3 V651.7 Z" fill="#1b6e5a" />
<rect x="1306.5" y="639.3" width="2.4" height="12.4" fill="#1b6e5a" />
<path d="M1335.2,643 A4.3,4.3 0 0 0 1327,644" fill="none" stroke="#1b6e5a" stroke-width="1.8"/>
<path d="M1326.5,648 A4.3,4.3 0 0 0 1334.8,647" fill="none" stroke="#1b6e5a" stroke-width="1.8"/>
<path d="M1336.2,640 V644.5 H1331.8 Z" fill="#1b6e5a" />
<path d="M1325.6,651 V646.5 H1330 Z" fill="#1b6e5a" />
<rect x="515.4" y="667.3" width="1492" height="12" fill="#f5f5f5" rx="3" stroke="#cacaca" stroke-width="1.8"/>
<rect x="613.3" y="680" width="1" height="4" fill="#c8c8c8" />
<text x="613.8" y="693.6" font-size="10.4" fill="#959595" text-anchor="middle" textLength="29.7" lengthAdjust="spacingAndGlyphs" >Nov 24</text>
<rect x="719.93" y="680" width="1" height="4" fill="#c8c8c8" />
<text x="720.43" y="693.6" font-size="10.4" fill="#959595" text-anchor="middle" textLength="34.5" lengthAdjust="spacingAndGlyphs" >12:00 pm</text>
<rect x="826.56" y="680" width="1" height="4" fill="#c8c8c8" />
<text x="827.06" y="693.6" font-size="10.4" fill="#959595" text-anchor="middle" textLength="29.7" lengthAdjust="spacingAndGlyphs" >Nov 25</text>
<rect x="933.1899999999999" y="680" width="1" height="4" fill="#c8c8c8" />
<text x="933.6899999999999" y="693.6" font-size="10.4" fill="#959595" text-anchor="middle" textLength="34.5" lengthAdjust="spacingAndGlyphs" >12:00 pm</text>
<rect x="1039.82" y="680" width="1" height="4" fill="#c8c8c8" />
<text x="1040.32" y="693.6" font-size="10.4" fill="#959595" text-anchor="middle" textLength="29.7" lengthAdjust="spacingAndGlyphs" >Nov 26</text>
<rect x="1146.4499999999998" y="680" width="1" height="4" fill="#c8c8c8" />
<text x="1146.9499999999998" y="693.6" font-size="10.4" fill="#959595" text-anchor="middle" textLength="34.5" lengthAdjust="spacingAndGlyphs" >12:00 pm</text>
<rect x="1253.08" y="680" width="1" height="4" fill="#c8c8c8" />
<text x="1253.58" y="693.6" font-size="10.4" fill="#959595" text-anchor="middle" textLength="29.7" lengthAdjust="spacingAndGlyphs" >Nov 27</text>
<rect x="1359.71" y="680" width="1" height="4" fill="#c8c8c8" />
<text x="1360.21" y="693.6" font-size="10.4" fill="#959595" text-anchor="middle" textLength="34.5" lengthAdjust="spacingAndGlyphs" >12:00 pm</text>
<rect x="1466.34" y="680" width="1" height="4" fill="#c8c8c8" />
<text x="1466.84" y="693.6" font-size="10.4" fill="#959595" text-anchor="middle" textLength="29.7" lengthAdjust="spacingAndGlyphs" >Nov 28</text>
<rect x="1572.9699999999998" y="680" width="1" height="4" fill="#c8c8c8" />
<text x="1573.4699999999998" y="693.6" font-size="10.4" fill="#959595" text-anchor="middle" textLength="34.5" lengthAdjust="spacingAndGlyphs" >12:00 pm</text>
<rect x="1679.6" y="680" width="1" height="4" fill="#c8c8c8" />
<text x="1680.1" y="693.6" font-size="10.4" fill="#959595" text-anchor="middle" textLength="29.7" lengthAdjust="spacingAndGlyphs" >Nov 29</text>
<rect x="1786.2299999999998" y="680" width="1" height="4" fill="#c8c8c8" />
<text x="1786.7299999999998" y="693.6" font-size="10.4" fill="#959595" text-anchor="middle" textLength="34.5" lengthAdjust="spacingAndGlyphs" >12:00 pm</text>
<rect x="1892.86" y="680" width="1" height="4" fill="#c8c8c8" />
<text x="1893.36" y="693.6" font-size="10.4" fill="#959595" text-anchor="middle" textLength="29.7" lengthAdjust="spacingAndGlyphs" >Nov 30</text>
<rect x="1999.49" y="680" width="1" height="4" fill="#c8c8c8" />
<text x="1999.99" y="693.6" font-size="10.4" fill="#959595" text-anchor="middle" textLength="34.5" lengthAdjust="spacingAndGlyphs" >12:00 pm</text>
<rect x="1365" y="667.5" width="641" height="12" fill="#ffffff" stroke="#117a62" stroke-width="2"/>
<rect x="1362.9" y="664.5" width="4" height="18.5" fill="#a9d3c7" stroke="#117a62" stroke-width="1.5" rx="0.8"/>
<rect x="2005.3" y="664.5" width="4" height="18.5" fill="#a9d3c7" stroke="#117a62" stroke-width="1.5" rx="0.8"/>
<rect x="2017.2" y="667.5" width="4.8" height="13.5" fill="#007960" />
<rect x="2024" y="667.5" width="4.8" height="13.5" fill="#007960" />
<path d="M2018.3,669 L2021,672 L2018.3,675 L2021,678 L2018.3,681" fill="none" stroke="#d9ece6" stroke-width="0.9" />
<path d="M2025.1,669 L2027.8,672 L2025.1,675 L2027.8,678 L2025.1,681" fill="none" stroke="#d9ece6" stroke-width="0.9" />
<path d="M502.5,717.5 V705.5" fill="none" stroke="#1f7d66" stroke-width="2.2" />
<path d="M497.6,709.5 L502.5,703.2 L507.4,709.5 Z" fill="#1f7d66" />
<text x="515.8" y="716.7" font-size="12" fill="#1f7d66" textLength="55" lengthAdjust="spacingAndGlyphs" >11/23/2018</text>
<text x="1255.7" y="716.7" font-size="12" fill="#1f7d66" textLength="31.5" lengthAdjust="spacingAndGlyphs" >7 days</text>
<text x="1973" y="716.7" font-size="12" fill="#1f7d66" textLength="55" lengthAdjust="spacingAndGlyphs" >11/30/2018</text>
<rect x="515.4" y="667.3" width="1492" height="12" fill="#f5f5f5" rx="3" stroke="#cacaca" stroke-width="1.8"/>
<rect x="613.3" y="680" width="1" height="4" fill="#c8c8c8" />
<text x="613.8" y="693.6" font-size="10.4" fill="#959595" text-anchor="middle" textLength="29.7" lengthAdjust="spacingAndGlyphs" >Nov 24</text>
<rect x="719.93" y="680" width="1" height="4" fill="#c8c8c8" />
<text x="720.43" y="693.6" font-size="10.4" fill="#959595" text-anchor="middle" textLength="34.5" lengthAdjust="spacingAndGlyphs" >12:00 pm</text>
<rect x="826.56" y="680" width="1" height="4" fill="#c8c8c8" />
<text x="827.06" y="693.6" font-size="10.4" fill="#959595" text-anchor="middle" textLength="29.7" lengthAdjust="spacingAndGlyphs" >Nov 25</text>
<rect x="933.1899999999999" y="680" width="1" height="4" fill="#c8c8c8" />
<text x="933.6899999999999" y="693.6" font-size="10.4" fill="#959595" text-anchor="middle" textLength="34.5" lengthAdjust="spacingAndGlyphs" >12:00 pm</text>
<rect x="1039.82" y="680" width="1" height="4" fill="#c8c8c8" />
<text x="1040.32" y="693.6" font-size="10.4" fill="#959595" text-anchor="middle" textLength="29.7" lengthAdjust="spacingAndGlyphs" >Nov 26</text>
<rect x="1146.4499999999998" y="680" width="1" height="4" fill="#c8c8c8" />
<text x="1146.9499999999998" y="693.6" font-size="10.4" fill="#959595" text-anchor="middle" textLength="34.5" lengthAdjust="spacingAndGlyphs" >12:00 pm</text>
<rect x="1253.08" y="680" width="1" height="4" fill="#c8c8c8" />
<text x="1253.58" y="693.6" font-size="10.4" fill="#959595" text-anchor="middle" textLength="29.7" lengthAdjust="spacingAndGlyphs" >Nov 27</text>
<rect x="1359.71" y="680" width="1" height="4" fill="#c8c8c8" />
<text x="1360.21" y="693.6" font-size="10.4" fill="#959595" text-anchor="middle" textLength="34.5" lengthAdjust="spacingAndGlyphs" >12:00 pm</text>
<rect x="1466.34" y="680" width="1" height="4" fill="#c8c8c8" />
<text x="1466.84" y="693.6" font-size="10.4" fill="#959595" text-anchor="middle" textLength="29.7" lengthAdjust="spacingAndGlyphs" >Nov 28</text>
<rect x="1572.9699999999998" y="680" width="1" height="4" fill="#c8c8c8" />
<text x="1573.4699999999998" y="693.6" font-size="10.4" fill="#959595" text-anchor="middle" textLength="34.5" lengthAdjust="spacingAndGlyphs" >12:00 pm</text>
<rect x="1679.6" y="680" width="1" height="4" fill="#c8c8c8" />
<text x="1680.1" y="693.6" font-size="10.4" fill="#959595" text-anchor="middle" textLength="29.7" lengthAdjust="spacingAndGlyphs" >Nov 29</text>
<rect x="1786.2299999999998" y="680" width="1" height="4" fill="#c8c8c8" />
<text x="1786.7299999999998" y="693.6" font-size="10.4" fill="#959595" text-anchor="middle" textLength="34.5" lengthAdjust="spacingAndGlyphs" >12:00 pm</text>
<rect x="1892.86" y="680" width="1" height="4" fill="#c8c8c8" />
<text x="1893.36" y="693.6" font-size="10.4" fill="#959595" text-anchor="middle" textLength="29.7" lengthAdjust="spacingAndGlyphs" >Nov 30</text>
<rect x="1999.49" y="680" width="1" height="4" fill="#c8c8c8" />
<text x="1999.99" y="693.6" font-size="10.4" fill="#959595" text-anchor="middle" textLength="34.5" lengthAdjust="spacingAndGlyphs" >12:00 pm</text>
<rect x="1365" y="667.5" width="641" height="12" fill="#ffffff" stroke="#117a62" stroke-width="2"/>
<rect x="1362.9" y="664.5" width="4" height="18.5" fill="#a9d3c7" stroke="#117a62" stroke-width="1.5" rx="0.8"/>
<rect x="2005.3" y="664.5" width="4" height="18.5" fill="#a9d3c7" stroke="#117a62" stroke-width="1.5" rx="0.8"/>
<rect x="2017.2" y="667.5" width="4.8" height="13.5" fill="#007960" />
<rect x="2024" y="667.5" width="4.8" height="13.5" fill="#007960" />
<path d="M2018.3,669 L2021,672 L2018.3,675 L2021,678 L2018.3,681" fill="none" stroke="#d9ece6" stroke-width="0.9" />
<path d="M2025.1,669 L2027.8,672 L2025.1,675 L2027.8,678 L2025.1,681" fill="none" stroke="#d9ece6" stroke-width="0.9" />
<path d="M502.5,717.5 V705.5" fill="none" stroke="#1f7d66" stroke-width="2.2" />
<path d="M497.6,709.5 L502.5,703.2 L507.4,709.5 Z" fill="#1f7d66" />
<text x="515.8" y="716.7" font-size="12" fill="#1f7d66" textLength="55" lengthAdjust="spacingAndGlyphs" >11/23/2018</text>
<text x="1255.7" y="716.7" font-size="12" fill="#1f7d66" textLength="31.5" lengthAdjust="spacingAndGlyphs" >7 days</text>
<text x="1973" y="716.7" font-size="12" fill="#1f7d66" textLength="55" lengthAdjust="spacingAndGlyphs" >11/30/2018</text>
<path d="M499.5,730.5 V742.5 H514.5" fill="none" stroke="#e8f4f0" stroke-width="1.4" />
<path d="M501.2,741.5 V737 L504.2,732.6 L507,735.5 L509.5,733.5 L513.6,738 V741.5 Z" fill="#ffffff" />
<text x="517.2" y="741" font-size="14.4" fill="#f0f8f5" textLength="36.3" lengthAdjust="spacingAndGlyphs" >Details</text>
<rect x="1640" y="725.7" width="74.3" height="20.3" fill="#ffffff" rx="3"/>
<circle cx="1649.8" cy="737" r="3.6" fill="none" stroke="#333" stroke-width="2.2" stroke-dasharray="1.6 1.2"/>
<circle cx="1649.8" cy="737" r="2.4" fill="none" stroke="#333" stroke-width="1.6"/>
<circle cx="1656" cy="732.6" r="1.8" fill="none" stroke="#333" stroke-width="1.2"/>
<circle cx="1656" cy="740.2" r="1.8" fill="none" stroke="#333" stroke-width="1.2"/>
<text x="1661" y="740.7" font-size="12" fill="#333" textLength="47.9" lengthAdjust="spacingAndGlyphs" >Customize</text>
<path d="M1742.2,727.5 H1740.3 V741 H1742.2 M1748.3,727.5 H1750.2 V741 H1748.3" fill="none" stroke="#eef7f4" stroke-width="1.2" />
<path d="M1742.3,738.5 L1743.5,730 L1745.2,736 L1746.8,730 L1748,738.5" fill="none" stroke="#eef7f4" stroke-width="0.9" />
<text x="1755" y="740.7" font-size="13.7" fill="#f0f8f5" textLength="48.4" lengthAdjust="spacingAndGlyphs" >Capsules</text>
<rect x="1997.5" y="725.3" width="43.5" height="21.1" fill="#ffffff" rx="3"/>
<rect x="2020" y="725.3" width="0.8" height="21.1" fill="#d4d4d4" />
<circle cx="2007.2" cy="734.8" r="4.1" fill="none" stroke="#222" stroke-width="1.7"/>
<path d="M2010.2,737.9 L2013.4,741.2" fill="none" stroke="#222" stroke-width="2.2" />
<path d="M2005.2,734.8 H2009.2 M2007.2,732.8 V736.8" fill="none" stroke="#222" stroke-width="1" />
<rect x="2025.5" y="730.8" width="9.5" height="10" fill="none" stroke="#999" stroke-width="1.1" rx="1.5"/>
<rect x="2027.2" y="735.3" width="6.1" height="1.1" fill="#999" />
<rect x="489" y="774.2" width="1231" height="2" fill="#e3e3e3" />
<path d="M564.2,760.6 L572.8000000000001,768.4 M572.8000000000001,760.6 L564.2,768.4" fill="none" stroke="#555" stroke-width="2.2" />
<rect x="584.6" y="759.4" width="9" height="9" fill="none" stroke="#7a7a7a" stroke-width="1.2" rx="1.8"/>
<path d="M632,763.1 L636,759.5 L640,763.1 Z M632,764.9 L636,768.5 L640,764.9 Z" fill="#666" />
<text x="647.5" y="768.4" font-size="12.1" fill="#404040" font-weight="bold" textLength="32.3" lengthAdjust="spacingAndGlyphs" >Name</text>
<path d="M688,763.1 L692,759.5 L696,763.1 Z M688,764.9 L692,768.5 L696,764.9 Z" fill="#666" />
<text x="1545.8" y="768" font-size="12.4" fill="#404040" font-weight="bold" textLength="34.1" lengthAdjust="spacingAndGlyphs" >Assets</text>
<text x="1587.8" y="768" font-size="12.4" fill="#1f7d66" font-weight="bold" textLength="26.1" lengthAdjust="spacingAndGlyphs" >Lane</text>
<path d="M1621.9,765.6 L1625.9,761.5 L1629.9,765.6 Z" fill="#1f7d66" />
<rect x="1696.4" y="754.8" width="10.5" height="9.5" fill="none" stroke="#444" stroke-width="1"/>
<rect x="1696.4" y="754.8" width="10.5" height="2.2" fill="#444" />
<rect x="1699.9" y="754.8" width="0.8" height="9.5" fill="#444" />
<rect x="1703.4" y="754.8" width="0.8" height="9.5" fill="#444" />
<rect x="1696.4" y="759.4" width="10.5" height="0.8" fill="#444" />
<rect x="1696.4" y="761.8" width="10.5" height="0.8" fill="#444" />
<circle cx="1707.6000000000001" cy="764.5999999999999" r="4.3" fill="#333" stroke="#fff" stroke-width="1"/>
<path d="M1705.3000000000002,764.5999999999999 H1709.9 M1707.6000000000001,762.3 V766.9" fill="none" stroke="#fff" stroke-width="1.3" />
<rect x="489" y="776.2" width="1231" height="22.299999999999955" fill="#f9f9f9" />
<rect x="489" y="798.0" width="1231" height="1" fill="#ececec" />
<rect x="489" y="799.5" width="1231" height="21.0" fill="#ffffff" />
<rect x="489" y="820.0" width="1231" height="1" fill="#ececec" />
<rect x="489" y="821.5" width="1231" height="21.0" fill="#f9f9f9" />
<rect x="489" y="842.0" width="1231" height="1" fill="#ececec" />
<path d="M531.5999999999999,781.7 C527.8,782.0 525.3,784.0 523.5999999999999,787.0 L520.8,787.5 L520.0,789.3 L522.8,789.4 L523.6999999999999,790.3 L523.8,793.0 L525.5999999999999,792.3 L526.0999999999999,789.6 C529.0,787.9 531.0999999999999,785.5 531.5999999999999,781.7 Z" fill="#007960" />
<path d="M521.8,790.1 L520.0,793.0 L522.9,791.3 Z" fill="#007960" />
<circle cx="549.9" cy="787.2" r="5.6" fill="#007960"/>
<rect x="549.0" y="786.0" width="1.9" height="4.6" fill="#fff" />
<rect x="548.1999999999999" y="789.5" width="3.5" height="1.1" fill="#fff" />
<rect x="548.1999999999999" y="786.0" width="2.2" height="1" fill="#fff" />
<circle cx="550.0" cy="784.0" r="1.1" fill="#fff"/>
<path d="M564.3,783.8000000000001 L572.9,791.6 M572.9,783.8000000000001 L564.3,791.6" fill="none" stroke="#007960" stroke-width="2.3" />
<rect x="584.6" y="782.1" width="9" height="9" fill="none" stroke="#7a7a7a" stroke-width="1.2" rx="1.8"/>
<text x="647.5" y="791.4000000000001" font-size="12.6" fill="#3a3a3a" textLength="71.5" lengthAdjust="spacingAndGlyphs" >Temperature</text>
<text x="1545.8" y="791.4000000000001" font-size="12.4" fill="#2f8a72" textLength="33.7" lengthAdjust="spacingAndGlyphs" >Area A</text>
<rect x="1545.8" y="792.8000000000001" width="33.7" height="0.9" fill="#2f8a72" />
<path d="M499.8,805.1 H493.8 V813.9 H502.8 V809.4" fill="none" stroke="#4a9a86" stroke-width="1.2" />
<path d="M497.3,811.6999999999999 L497.8,809.5 L503.6,803.6999999999999 L505.6,805.6999999999999 L499.8,811.3 Z" fill="none" stroke="#4a9a86" stroke-width="1.1" />
<path d="M531.5999999999999,804.0 C527.8,804.3 525.3,806.3 523.5999999999999,809.3 L520.8,809.8 L520.0,811.5999999999999 L522.8,811.6999999999999 L523.6999999999999,812.5999999999999 L523.8,815.3 L525.5999999999999,814.5999999999999 L526.0999999999999,811.9 C529.0,810.1999999999999 531.0999999999999,807.8 531.5999999999999,804.0 Z" fill="#007960" />
<path d="M521.8,812.4 L520.0,815.3 L522.9,813.5999999999999 Z" fill="#007960" />
<circle cx="549.9" cy="809.5" r="5.6" fill="#007960"/>
<rect x="549.0" y="808.3" width="1.9" height="4.6" fill="#fff" />
<rect x="548.1999999999999" y="811.8" width="3.5" height="1.1" fill="#fff" />
<rect x="548.1999999999999" y="808.3" width="2.2" height="1" fill="#fff" />
<circle cx="550.0" cy="806.3" r="1.1" fill="#fff"/>
<path d="M564.3,806.1 L572.9,813.9 M572.9,806.1 L564.3,813.9" fill="none" stroke="#007960" stroke-width="2.3" />
<rect x="584.6" y="804.4" width="9" height="9" fill="none" stroke="#7a7a7a" stroke-width="1.2" rx="1.8"/>
<text x="647.5" y="813.7" font-size="12.6" fill="#3a3a3a" textLength="56.7" lengthAdjust="spacingAndGlyphs" >HiHi Temp</text>
<text x="1545.8" y="813.7" font-size="12.4" fill="#2f8a72" textLength="33.7" lengthAdjust="spacingAndGlyphs" >Area A</text>
<rect x="1545.8" y="815.1" width="33.7" height="0.9" fill="#2f8a72" />
<path d="M499.8,827.2 H493.8 V836.0 H502.8 V831.5" fill="none" stroke="#4a9a86" stroke-width="1.2" />
<path d="M497.3,833.8 L497.8,831.6 L503.6,825.8 L505.6,827.8 L499.8,833.4 Z" fill="none" stroke="#4a9a86" stroke-width="1.1" />
<path d="M531.5999999999999,826.1 C527.8,826.4 525.3,828.4 523.5999999999999,831.4 L520.8,831.9 L520.0,833.6999999999999 L522.8,833.8 L523.6999999999999,834.6999999999999 L523.8,837.4 L525.5999999999999,836.6999999999999 L526.0999999999999,834.0 C529.0,832.3 531.0999999999999,829.9 531.5999999999999,826.1 Z" fill="#007960" />
<path d="M521.8,834.5 L520.0,837.4 L522.9,835.6999999999999 Z" fill="#007960" />
<circle cx="549.9" cy="831.6" r="5.6" fill="#007960"/>
<rect x="549.0" y="830.4" width="1.9" height="4.6" fill="#fff" />
<rect x="548.1999999999999" y="833.9" width="3.5" height="1.1" fill="#fff" />
<rect x="548.1999999999999" y="830.4" width="2.2" height="1" fill="#fff" />
<circle cx="550.0" cy="828.4" r="1.1" fill="#fff"/>
<path d="M564.3,828.2 L572.9,836.0 M572.9,828.2 L564.3,836.0" fill="none" stroke="#007960" stroke-width="2.3" />
<rect x="584.6" y="826.5" width="9" height="9" fill="none" stroke="#7a7a7a" stroke-width="1.2" rx="1.8"/>
<text x="647.5" y="835.8000000000001" font-size="12.6" fill="#3a3a3a" textLength="44.8" lengthAdjust="spacingAndGlyphs" >Hi Temp</text>
<text x="1545.8" y="835.8000000000001" font-size="12.4" fill="#2f8a72" textLength="33.7" lengthAdjust="spacingAndGlyphs" >Area A</text>
<rect x="1545.8" y="837.2" width="33.7" height="0.9" fill="#2f8a72" />
<path d="M606.8,789.3 L609.3,779.3 L612.8,788 L615,782.5 L618.5,791.3 L620.3,787 L621.9,788.5" fill="none" stroke="#4050a8" stroke-width="1.6" />
<text x="628.2" y="791.4" font-size="12.4" fill="#555" textLength="10.2" lengthAdjust="spacingAndGlyphs" >°F</text>
<text x="1622" y="791.4" font-size="12" fill="#444" >1</text>
<rect x="608.1" y="800.2" width="12.1" height="14.8" fill="#7a35b0" />
<path d="M609.9,801.7 L612.3000000000001,804.7 L610.1,807.7 L612.3000000000001,810.7 L609.9,813.7 M615.7,801.7 L618.1,804.7 L615.9,807.7 L618.1,810.7 L615.7,813.7" fill="none" stroke="#e9e9f5" stroke-width="1.1" />
<rect x="613.4" y="800.2" width="1.4" height="14.8" fill="#f0f0f0" />
<rect x="608.1" y="822.3" width="12.1" height="14.8" fill="#73b84f" />
<path d="M609.9,823.8 L612.3000000000001,826.8 L610.1,829.8 L612.3000000000001,832.8 L609.9,835.8 M615.7,823.8 L618.1,826.8 L615.9,829.8 L618.1,832.8 L615.7,835.8" fill="none" stroke="#e9e9f5" stroke-width="1.1" />
<rect x="613.4" y="822.3" width="1.4" height="14.8" fill="#f0f0f0" />
<rect x="1721.8" y="864.5" width="1" height="7.5" fill="#8f8f8f" />
<rect x="1724.2" y="864.5" width="1" height="7.5" fill="#8f8f8f" />
<path d="M499.5,730.5 V742.5 H514.5" fill="none" stroke="#e8f4f0" stroke-width="1.4" />
<path d="M501.2,741.5 V737 L504.2,732.6 L507,735.5 L509.5,733.5 L513.6,738 V741.5 Z" fill="#ffffff" />
<text x="517.2" y="741" font-size="14.4" fill="#f0f8f5" textLength="36.3" lengthAdjust="spacingAndGlyphs" >Details</text>
<rect x="1640" y="725.7" width="74.3" height="20.3" fill="#ffffff" rx="3"/>
<circle cx="1649.8" cy="737" r="3.6" fill="none" stroke="#333" stroke-width="2.2" stroke-dasharray="1.6 1.2"/>
<circle cx="1649.8" cy="737" r="2.4" fill="none" stroke="#333" stroke-width="1.6"/>
<circle cx="1656" cy="732.6" r="1.8" fill="none" stroke="#333" stroke-width="1.2"/>
<circle cx="1656" cy="740.2" r="1.8" fill="none" stroke="#333" stroke-width="1.2"/>
<text x="1661" y="740.7" font-size="12" fill="#333" textLength="47.9" lengthAdjust="spacingAndGlyphs" >Customize</text>
<path d="M1742.2,727.5 H1740.3 V741 H1742.2 M1748.3,727.5 H1750.2 V741 H1748.3" fill="none" stroke="#eef7f4" stroke-width="1.2" />
<path d="M1742.3,738.5 L1743.5,730 L1745.2,736 L1746.8,730 L1748,738.5" fill="none" stroke="#eef7f4" stroke-width="0.9" />
<text x="1755" y="740.7" font-size="13.7" fill="#f0f8f5" textLength="48.4" lengthAdjust="spacingAndGlyphs" >Capsules</text>
<rect x="1997.5" y="725.3" width="43.5" height="21.1" fill="#ffffff" rx="3"/>
<rect x="2020" y="725.3" width="0.8" height="21.1" fill="#d4d4d4" />
<circle cx="2007.2" cy="734.8" r="4.1" fill="none" stroke="#222" stroke-width="1.7"/>
<path d="M2010.2,737.9 L2013.4,741.2" fill="none" stroke="#222" stroke-width="2.2" />
<path d="M2005.2,734.8 H2009.2 M2007.2,732.8 V736.8" fill="none" stroke="#222" stroke-width="1" />
<rect x="2025.5" y="730.8" width="9.5" height="10" fill="none" stroke="#999" stroke-width="1.1" rx="1.5"/>
<rect x="2027.2" y="735.3" width="6.1" height="1.1" fill="#999" />
<rect x="489" y="774.2" width="1231" height="2" fill="#e3e3e3" />
<path d="M564.2,760.6 L572.8000000000001,768.4 M572.8000000000001,760.6 L564.2,768.4" fill="none" stroke="#555" stroke-width="2.2" />
<rect x="584.6" y="759.4" width="9" height="9" fill="none" stroke="#7a7a7a" stroke-width="1.2" rx="1.8"/>
<path d="M632,763.1 L636,759.5 L640,763.1 Z M632,764.9 L636,768.5 L640,764.9 Z" fill="#666" />
<text x="647.5" y="768.4" font-size="12.1" fill="#404040" font-weight="bold" textLength="32.3" lengthAdjust="spacingAndGlyphs" >Name</text>
<path d="M688,763.1 L692,759.5 L696,763.1 Z M688,764.9 L692,768.5 L696,764.9 Z" fill="#666" />
<text x="1545.8" y="768" font-size="12.4" fill="#404040" font-weight="bold" textLength="34.1" lengthAdjust="spacingAndGlyphs" >Assets</text>
<text x="1587.8" y="768" font-size="12.4" fill="#1f7d66" font-weight="bold" textLength="26.1" lengthAdjust="spacingAndGlyphs" >Lane</text>
<path d="M1621.9,765.6 L1625.9,761.5 L1629.9,765.6 Z" fill="#1f7d66" />
<rect x="1696.4" y="754.8" width="10.5" height="9.5" fill="none" stroke="#444" stroke-width="1"/>
<rect x="1696.4" y="754.8" width="10.5" height="2.2" fill="#444" />
<rect x="1699.9" y="754.8" width="0.8" height="9.5" fill="#444" />
<rect x="1703.4" y="754.8" width="0.8" height="9.5" fill="#444" />
<rect x="1696.4" y="759.4" width="10.5" height="0.8" fill="#444" />
<rect x="1696.4" y="761.8" width="10.5" height="0.8" fill="#444" />
<circle cx="1707.6000000000001" cy="764.5999999999999" r="4.3" fill="#333" stroke="#fff" stroke-width="1"/>
<path d="M1705.3000000000002,764.5999999999999 H1709.9 M1707.6000000000001,762.3 V766.9" fill="none" stroke="#fff" stroke-width="1.3" />
<rect x="489" y="776.2" width="1231" height="22.299999999999955" fill="#f9f9f9" />
<rect x="489" y="798.0" width="1231" height="1" fill="#ececec" />
<rect x="489" y="799.5" width="1231" height="21.0" fill="#ffffff" />
<rect x="489" y="820.0" width="1231" height="1" fill="#ececec" />
<rect x="489" y="821.5" width="1231" height="21.0" fill="#f9f9f9" />
<rect x="489" y="842.0" width="1231" height="1" fill="#ececec" />
<path d="M531.5999999999999,781.7 C527.8,782.0 525.3,784.0 523.5999999999999,787.0 L520.8,787.5 L520.0,789.3 L522.8,789.4 L523.6999999999999,790.3 L523.8,793.0 L525.5999999999999,792.3 L526.0999999999999,789.6 C529.0,787.9 531.0999999999999,785.5 531.5999999999999,781.7 Z" fill="#007960" />
<path d="M521.8,790.1 L520.0,793.0 L522.9,791.3 Z" fill="#007960" />
<circle cx="549.9" cy="787.2" r="5.6" fill="#007960"/>
<rect x="549.0" y="786.0" width="1.9" height="4.6" fill="#fff" />
<rect x="548.1999999999999" y="789.5" width="3.5" height="1.1" fill="#fff" />
<rect x="548.1999999999999" y="786.0" width="2.2" height="1" fill="#fff" />
<circle cx="550.0" cy="784.0" r="1.1" fill="#fff"/>
<path d="M564.3,783.8000000000001 L572.9,791.6 M572.9,783.8000000000001 L564.3,791.6" fill="none" stroke="#007960" stroke-width="2.3" />
<rect x="584.6" y="782.1" width="9" height="9" fill="none" stroke="#7a7a7a" stroke-width="1.2" rx="1.8"/>
<text x="647.5" y="791.4000000000001" font-size="12.6" fill="#3a3a3a" textLength="71.5" lengthAdjust="spacingAndGlyphs" >Temperature</text>
<text x="1545.8" y="791.4000000000001" font-size="12.4" fill="#2f8a72" textLength="33.7" lengthAdjust="spacingAndGlyphs" >Area A</text>
<rect x="1545.8" y="792.8000000000001" width="33.7" height="0.9" fill="#2f8a72" />
<path d="M499.8,805.1 H493.8 V813.9 H502.8 V809.4" fill="none" stroke="#4a9a86" stroke-width="1.2" />
<path d="M497.3,811.6999999999999 L497.8,809.5 L503.6,803.6999999999999 L505.6,805.6999999999999 L499.8,811.3 Z" fill="none" stroke="#4a9a86" stroke-width="1.1" />
<path d="M531.5999999999999,804.0 C527.8,804.3 525.3,806.3 523.5999999999999,809.3 L520.8,809.8 L520.0,811.5999999999999 L522.8,811.6999999999999 L523.6999999999999,812.5999999999999 L523.8,815.3 L525.5999999999999,814.5999999999999 L526.0999999999999,811.9 C529.0,810.1999999999999 531.0999999999999,807.8 531.5999999999999,804.0 Z" fill="#007960" />
<path d="M521.8,812.4 L520.0,815.3 L522.9,813.5999999999999 Z" fill="#007960" />
<circle cx="549.9" cy="809.5" r="5.6" fill="#007960"/>
<rect x="549.0" y="808.3" width="1.9" height="4.6" fill="#fff" />
<rect x="548.1999999999999" y="811.8" width="3.5" height="1.1" fill="#fff" />
<rect x="548.1999999999999" y="808.3" width="2.2" height="1" fill="#fff" />
<circle cx="550.0" cy="806.3" r="1.1" fill="#fff"/>
<path d="M564.3,806.1 L572.9,813.9 M572.9,806.1 L564.3,813.9" fill="none" stroke="#007960" stroke-width="2.3" />
<rect x="584.6" y="804.4" width="9" height="9" fill="none" stroke="#7a7a7a" stroke-width="1.2" rx="1.8"/>
<text x="647.5" y="813.7" font-size="12.6" fill="#3a3a3a" textLength="56.7" lengthAdjust="spacingAndGlyphs" >HiHi Temp</text>
<text x="1545.8" y="813.7" font-size="12.4" fill="#2f8a72" textLength="33.7" lengthAdjust="spacingAndGlyphs" >Area A</text>
<rect x="1545.8" y="815.1" width="33.7" height="0.9" fill="#2f8a72" />
<path d="M499.8,827.2 H493.8 V836.0 H502.8 V831.5" fill="none" stroke="#4a9a86" stroke-width="1.2" />
<path d="M497.3,833.8 L497.8,831.6 L503.6,825.8 L505.6,827.8 L499.8,833.4 Z" fill="none" stroke="#4a9a86" stroke-width="1.1" />
<path d="M531.5999999999999,826.1 C527.8,826.4 525.3,828.4 523.5999999999999,831.4 L520.8,831.9 L520.0,833.6999999999999 L522.8,833.8 L523.6999999999999,834.6999999999999 L523.8,837.4 L525.5999999999999,836.6999999999999 L526.0999999999999,834.0 C529.0,832.3 531.0999999999999,829.9 531.5999999999999,826.1 Z" fill="#007960" />
<path d="M521.8,834.5 L520.0,837.4 L522.9,835.6999999999999 Z" fill="#007960" />
<circle cx="549.9" cy="831.6" r="5.6" fill="#007960"/>
<rect x="549.0" y="830.4" width="1.9" height="4.6" fill="#fff" />
<rect x="548.1999999999999" y="833.9" width="3.5" height="1.1" fill="#fff" />
<rect x="548.1999999999999" y="830.4" width="2.2" height="1" fill="#fff" />
<circle cx="550.0" cy="828.4" r="1.1" fill="#fff"/>
<path d="M564.3,828.2 L572.9,836.0 M572.9,828.2 L564.3,836.0" fill="none" stroke="#007960" stroke-width="2.3" />
<rect x="584.6" y="826.5" width="9" height="9" fill="none" stroke="#7a7a7a" stroke-width="1.2" rx="1.8"/>
<text x="647.5" y="835.8000000000001" font-size="12.6" fill="#3a3a3a" textLength="44.8" lengthAdjust="spacingAndGlyphs" >Hi Temp</text>
<text x="1545.8" y="835.8000000000001" font-size="12.4" fill="#2f8a72" textLength="33.7" lengthAdjust="spacingAndGlyphs" >Area A</text>
<rect x="1545.8" y="837.2" width="33.7" height="0.9" fill="#2f8a72" />
<path d="M606.8,789.3 L609.3,779.3 L612.8,788 L615,782.5 L618.5,791.3 L620.3,787 L621.9,788.5" fill="none" stroke="#4050a8" stroke-width="1.6" />
<text x="628.2" y="791.4" font-size="12.4" fill="#555" textLength="10.2" lengthAdjust="spacingAndGlyphs" >°F</text>
<text x="1622" y="791.4" font-size="12" fill="#444" >1</text>
<rect x="608.1" y="800.2" width="12.1" height="14.8" fill="#7a35b0" />
<path d="M609.9,801.7 L612.3000000000001,804.7 L610.1,807.7 L612.3000000000001,810.7 L609.9,813.7 M615.7,801.7 L618.1,804.7 L615.9,807.7 L618.1,810.7 L615.7,813.7" fill="none" stroke="#e9e9f5" stroke-width="1.1" />
<rect x="613.4" y="800.2" width="1.4" height="14.8" fill="#f0f0f0" />
<rect x="608.1" y="822.3" width="12.1" height="14.8" fill="#73b84f" />
<path d="M609.9,823.8 L612.3000000000001,826.8 L610.1,829.8 L612.3000000000001,832.8 L609.9,835.8 M615.7,823.8 L618.1,826.8 L615.9,829.8 L618.1,832.8 L615.7,835.8" fill="none" stroke="#e9e9f5" stroke-width="1.1" />
<rect x="613.4" y="822.3" width="1.4" height="14.8" fill="#f0f0f0" />
<rect x="1721.8" y="864.5" width="1" height="7.5" fill="#8f8f8f" />
<rect x="1724.2" y="864.5" width="1" height="7.5" fill="#8f8f8f" />
<rect x="1728" y="777.2" width="316" height="2" fill="#e3e3e3" />
<rect x="1734.8" y="762.0" width="9.3" height="9.3" fill="none" stroke="#7a7a7a" stroke-width="1.2" rx="1.8"/>
<text x="1778.6" y="771.6" font-size="13.2" fill="#1f7d66" font-weight="bold" textLength="27.4" lengthAdjust="spacingAndGlyphs" >Start</text>
<path d="M1813.6,767 L1817.6,763 L1821.7,767 Z" fill="#1f7d66" />
<rect x="1977" y="756.5" width="10.5" height="9.5" fill="none" stroke="#444" stroke-width="1"/>
<rect x="1977" y="756.5" width="10.5" height="2.2" fill="#444" />
<rect x="1980.5" y="756.5" width="0.8" height="9.5" fill="#444" />
<rect x="1984" y="756.5" width="0.8" height="9.5" fill="#444" />
<rect x="1977" y="761.1" width="10.5" height="0.8" fill="#444" />
<rect x="1977" y="763.5" width="10.5" height="0.8" fill="#444" />
<circle cx="1988.2" cy="766.3" r="4.3" fill="#333" stroke="#fff" stroke-width="1"/>
<path d="M1985.9,766.3 H1990.5 M1988.2,764.0 V768.6" fill="none" stroke="#fff" stroke-width="1.3" />
<rect x="2004" y="752" width="1" height="24" fill="#e6e6e6" />
<rect x="2022" y="756.5" width="10.5" height="9.5" fill="none" stroke="#4a5fae" stroke-width="1"/>
<rect x="2022" y="756.5" width="10.5" height="2.2" fill="#4a5fae" />
<rect x="2025.5" y="756.5" width="0.8" height="9.5" fill="#4a5fae" />
<rect x="2029" y="756.5" width="0.8" height="9.5" fill="#4a5fae" />
<rect x="2022" y="761.1" width="10.5" height="0.8" fill="#4a5fae" />
<rect x="2022" y="763.5" width="10.5" height="0.8" fill="#4a5fae" />
<circle cx="2033.2" cy="766.3" r="4.3" fill="#3c58b0" stroke="#fff" stroke-width="1"/>
<path d="M2030.9,766.3 H2035.5 M2033.2,764.0 V768.6" fill="none" stroke="#fff" stroke-width="1.3" />
<rect x="1728" y="779.2" width="316" height="22.699999999999932" fill="#f9f9f9" />
<rect x="1728" y="801.4" width="316" height="1" fill="#e9e9e9" />
<rect x="1734.8" y="785.4" width="9.3" height="9.3" fill="none" stroke="#7a7a7a" stroke-width="1.2" rx="1.8"/>
<path d="M1761.8,782.0 H1759.6 V795.6 H1761.8 M1766.8,782.0 H1769.0 V795.6 H1766.8" fill="none" stroke="#86c062" stroke-width="1.2" />
<path d="M1762.0,792.8 L1763.1,784.6 L1764.3,790.5 L1765.5,784.6 L1766.6,792.8" fill="none" stroke="#86c062" stroke-width="0.8" />
<text x="1778.6" y="794.3" font-size="13.2" fill="#3d3d3d" textLength="112.4" lengthAdjust="spacingAndGlyphs" >Nov 27, 2018 4:06 PM</text>
<rect x="1728" y="802.9" width="316" height="21.300000000000068" fill="#ffffff" />
<rect x="1728" y="823.7" width="316" height="1" fill="#e9e9e9" />
<rect x="1734.8" y="807.93" width="9.3" height="9.3" fill="none" stroke="#7a7a7a" stroke-width="1.2" rx="1.8"/>
<path d="M1761.8,804.53 H1759.6 V818.13 H1761.8 M1766.8,804.53 H1769.0 V818.13 H1766.8" fill="none" stroke="#86c062" stroke-width="1.2" />
<path d="M1762.0,815.3299999999999 L1763.1,807.13 L1764.3,813.03 L1765.5,807.13 L1766.6,815.3299999999999" fill="none" stroke="#86c062" stroke-width="0.8" />
<text x="1778.6" y="816.8299999999999" font-size="13.2" fill="#3d3d3d" textLength="112.4" lengthAdjust="spacingAndGlyphs" >Nov 28, 2018 3:15 PM</text>
<rect x="1728" y="825.2" width="316" height="21.299999999999955" fill="#f9f9f9" />
<rect x="1728" y="846.0" width="316" height="1" fill="#e9e9e9" />
<rect x="1734.8" y="830.4599999999999" width="9.3" height="9.3" fill="none" stroke="#7a7a7a" stroke-width="1.2" rx="1.8"/>
<path d="M1761.8,827.06 H1759.6 V840.66 H1761.8 M1766.8,827.06 H1769.0 V840.66 H1766.8" fill="none" stroke="#8a4cb8" stroke-width="1.2" />
<path d="M1762.0,837.8599999999999 L1763.1,829.66 L1764.3,835.56 L1765.5,829.66 L1766.6,837.8599999999999" fill="none" stroke="#8a4cb8" stroke-width="0.8" />
<text x="1778.6" y="839.3599999999999" font-size="13.2" fill="#3d3d3d" textLength="112.4" lengthAdjust="spacingAndGlyphs" >Nov 28, 2018 5:40 PM</text>
<rect x="1728" y="847.5" width="316" height="21.299999999999955" fill="#ffffff" />
<rect x="1728" y="868.3" width="316" height="1" fill="#e9e9e9" />
<rect x="1734.8" y="852.99" width="9.3" height="9.3" fill="none" stroke="#7a7a7a" stroke-width="1.2" rx="1.8"/>
<path d="M1761.8,849.59 H1759.6 V863.19 H1761.8 M1766.8,849.59 H1769.0 V863.19 H1766.8" fill="none" stroke="#86c062" stroke-width="1.2" />
<path d="M1762.0,860.39 L1763.1,852.19 L1764.3,858.09 L1765.5,852.19 L1766.6,860.39" fill="none" stroke="#86c062" stroke-width="0.8" />
<text x="1778.6" y="861.89" font-size="13.2" fill="#3d3d3d" textLength="112.4" lengthAdjust="spacingAndGlyphs" >Nov 28, 2018 6:58 PM</text>
<rect x="1728" y="869.8" width="316" height="21.300000000000068" fill="#f9f9f9" />
<rect x="1728" y="890.6" width="316" height="1" fill="#e9e9e9" />
<rect x="1734.8" y="875.52" width="9.3" height="9.3" fill="none" stroke="#7a7a7a" stroke-width="1.2" rx="1.8"/>
<path d="M1761.8,872.12 H1759.6 V885.72 H1761.8 M1766.8,872.12 H1769.0 V885.72 H1766.8" fill="none" stroke="#8a4cb8" stroke-width="1.2" />
<path d="M1762.0,882.92 L1763.1,874.72 L1764.3,880.62 L1765.5,874.72 L1766.6,882.92" fill="none" stroke="#8a4cb8" stroke-width="0.8" />
<text x="1778.6" y="884.42" font-size="13.2" fill="#3d3d3d" textLength="112.4" lengthAdjust="spacingAndGlyphs" >Nov 28, 2018 7:38 PM</text>
<rect x="1728" y="892.1" width="316" height="21.299999999999955" fill="#ffffff" />
<rect x="1728" y="912.9" width="316" height="1" fill="#e9e9e9" />
<rect x="1734.8" y="898.05" width="9.3" height="9.3" fill="none" stroke="#7a7a7a" stroke-width="1.2" rx="1.8"/>
<path d="M1761.8,894.65 H1759.6 V908.25 H1761.8 M1766.8,894.65 H1769.0 V908.25 H1766.8" fill="none" stroke="#86c062" stroke-width="1.2" />
<path d="M1762.0,905.4499999999999 L1763.1,897.25 L1764.3,903.15 L1765.5,897.25 L1766.6,905.4499999999999" fill="none" stroke="#86c062" stroke-width="0.8" />
<text x="1778.6" y="906.9499999999999" font-size="13.2" fill="#3d3d3d" textLength="118.1" lengthAdjust="spacingAndGlyphs" >Nov 29, 2018 12:27 AM</text>
<rect x="1728" y="914.4" width="316" height="21.300000000000068" fill="#f9f9f9" />
<rect x="1728" y="935.2" width="316" height="1" fill="#e9e9e9" />
<rect x="1734.8" y="920.58" width="9.3" height="9.3" fill="none" stroke="#7a7a7a" stroke-width="1.2" rx="1.8"/>
<path d="M1761.8,917.1800000000001 H1759.6 V930.7800000000001 H1761.8 M1766.8,917.1800000000001 H1769.0 V930.7800000000001 H1766.8" fill="none" stroke="#86c062" stroke-width="1.2" />
<path d="M1762.0,927.98 L1763.1,919.7800000000001 L1764.3,925.6800000000001 L1765.5,919.7800000000001 L1766.6,927.98" fill="none" stroke="#86c062" stroke-width="0.8" />
<text x="1778.6" y="929.48" font-size="13.2" fill="#3d3d3d" textLength="112.4" lengthAdjust="spacingAndGlyphs" >Nov 29, 2018 3:50 PM</text>
<rect x="1728" y="777.2" width="316" height="2" fill="#e3e3e3" />
<rect x="1734.8" y="762.0" width="9.3" height="9.3" fill="none" stroke="#7a7a7a" stroke-width="1.2" rx="1.8"/>
<text x="1778.6" y="771.6" font-size="13.2" fill="#1f7d66" font-weight="bold" textLength="27.4" lengthAdjust="spacingAndGlyphs" >Start</text>
<path d="M1813.6,767 L1817.6,763 L1821.7,767 Z" fill="#1f7d66" />
<rect x="1977" y="756.5" width="10.5" height="9.5" fill="none" stroke="#444" stroke-width="1"/>
<rect x="1977" y="756.5" width="10.5" height="2.2" fill="#444" />
<rect x="1980.5" y="756.5" width="0.8" height="9.5" fill="#444" />
<rect x="1984" y="756.5" width="0.8" height="9.5" fill="#444" />
<rect x="1977" y="761.1" width="10.5" height="0.8" fill="#444" />
<rect x="1977" y="763.5" width="10.5" height="0.8" fill="#444" />
<circle cx="1988.2" cy="766.3" r="4.3" fill="#333" stroke="#fff" stroke-width="1"/>
<path d="M1985.9,766.3 H1990.5 M1988.2,764.0 V768.6" fill="none" stroke="#fff" stroke-width="1.3" />
<rect x="2004" y="752" width="1" height="24" fill="#e6e6e6" />
<rect x="2022" y="756.5" width="10.5" height="9.5" fill="none" stroke="#4a5fae" stroke-width="1"/>
<rect x="2022" y="756.5" width="10.5" height="2.2" fill="#4a5fae" />
<rect x="2025.5" y="756.5" width="0.8" height="9.5" fill="#4a5fae" />
<rect x="2029" y="756.5" width="0.8" height="9.5" fill="#4a5fae" />
<rect x="2022" y="761.1" width="10.5" height="0.8" fill="#4a5fae" />
<rect x="2022" y="763.5" width="10.5" height="0.8" fill="#4a5fae" />
<circle cx="2033.2" cy="766.3" r="4.3" fill="#3c58b0" stroke="#fff" stroke-width="1"/>
<path d="M2030.9,766.3 H2035.5 M2033.2,764.0 V768.6" fill="none" stroke="#fff" stroke-width="1.3" />
<rect x="1728" y="779.2" width="316" height="22.699999999999932" fill="#f9f9f9" />
<rect x="1728" y="801.4" width="316" height="1" fill="#e9e9e9" />
<rect x="1734.8" y="785.4" width="9.3" height="9.3" fill="none" stroke="#7a7a7a" stroke-width="1.2" rx="1.8"/>
<path d="M1761.8,782.0 H1759.6 V795.6 H1761.8 M1766.8,782.0 H1769.0 V795.6 H1766.8" fill="none" stroke="#86c062" stroke-width="1.2" />
<path d="M1762.0,792.8 L1763.1,784.6 L1764.3,790.5 L1765.5,784.6 L1766.6,792.8" fill="none" stroke="#86c062" stroke-width="0.8" />
<text x="1778.6" y="794.3" font-size="13.2" fill="#3d3d3d" textLength="112.4" lengthAdjust="spacingAndGlyphs" >Nov 27, 2018 4:06 PM</text>
<rect x="1728" y="802.9" width="316" height="21.300000000000068" fill="#ffffff" />
<rect x="1728" y="823.7" width="316" height="1" fill="#e9e9e9" />
<rect x="1734.8" y="807.93" width="9.3" height="9.3" fill="none" stroke="#7a7a7a" stroke-width="1.2" rx="1.8"/>
<path d="M1761.8,804.53 H1759.6 V818.13 H1761.8 M1766.8,804.53 H1769.0 V818.13 H1766.8" fill="none" stroke="#86c062" stroke-width="1.2" />
<path d="M1762.0,815.3299999999999 L1763.1,807.13 L1764.3,813.03 L1765.5,807.13 L1766.6,815.3299999999999" fill="none" stroke="#86c062" stroke-width="0.8" />
<text x="1778.6" y="816.8299999999999" font-size="13.2" fill="#3d3d3d" textLength="112.4" lengthAdjust="spacingAndGlyphs" >Nov 28, 2018 3:15 PM</text>
<rect x="1728" y="825.2" width="316" height="21.299999999999955" fill="#f9f9f9" />
<rect x="1728" y="846.0" width="316" height="1" fill="#e9e9e9" />
<rect x="1734.8" y="830.4599999999999" width="9.3" height="9.3" fill="none" stroke="#7a7a7a" stroke-width="1.2" rx="1.8"/>
<path d="M1761.8,827.06 H1759.6 V840.66 H1761.8 M1766.8,827.06 H1769.0 V840.66 H1766.8" fill="none" stroke="#8a4cb8" stroke-width="1.2" />
<path d="M1762.0,837.8599999999999 L1763.1,829.66 L1764.3,835.56 L1765.5,829.66 L1766.6,837.8599999999999" fill="none" stroke="#8a4cb8" stroke-width="0.8" />
<text x="1778.6" y="839.3599999999999" font-size="13.2" fill="#3d3d3d" textLength="112.4" lengthAdjust="spacingAndGlyphs" >Nov 28, 2018 5:40 PM</text>
<rect x="1728" y="847.5" width="316" height="21.299999999999955" fill="#ffffff" />
<rect x="1728" y="868.3" width="316" height="1" fill="#e9e9e9" />
<rect x="1734.8" y="852.99" width="9.3" height="9.3" fill="none" stroke="#7a7a7a" stroke-width="1.2" rx="1.8"/>
<path d="M1761.8,849.59 H1759.6 V863.19 H1761.8 M1766.8,849.59 H1769.0 V863.19 H1766.8" fill="none" stroke="#86c062" stroke-width="1.2" />
<path d="M1762.0,860.39 L1763.1,852.19 L1764.3,858.09 L1765.5,852.19 L1766.6,860.39" fill="none" stroke="#86c062" stroke-width="0.8" />
<text x="1778.6" y="861.89" font-size="13.2" fill="#3d3d3d" textLength="112.4" lengthAdjust="spacingAndGlyphs" >Nov 28, 2018 6:58 PM</text>
<rect x="1728" y="869.8" width="316" height="21.300000000000068" fill="#f9f9f9" />
<rect x="1728" y="890.6" width="316" height="1" fill="#e9e9e9" />
<rect x="1734.8" y="875.52" width="9.3" height="9.3" fill="none" stroke="#7a7a7a" stroke-width="1.2" rx="1.8"/>
<path d="M1761.8,872.12 H1759.6 V885.72 H1761.8 M1766.8,872.12 H1769.0 V885.72 H1766.8" fill="none" stroke="#8a4cb8" stroke-width="1.2" />
<path d="M1762.0,882.92 L1763.1,874.72 L1764.3,880.62 L1765.5,874.72 L1766.6,882.92" fill="none" stroke="#8a4cb8" stroke-width="0.8" />
<text x="1778.6" y="884.42" font-size="13.2" fill="#3d3d3d" textLength="112.4" lengthAdjust="spacingAndGlyphs" >Nov 28, 2018 7:38 PM</text>
<rect x="1728" y="892.1" width="316" height="21.299999999999955" fill="#ffffff" />
<rect x="1728" y="912.9" width="316" height="1" fill="#e9e9e9" />
<rect x="1734.8" y="898.05" width="9.3" height="9.3" fill="none" stroke="#7a7a7a" stroke-width="1.2" rx="1.8"/>
<path d="M1761.8,894.65 H1759.6 V908.25 H1761.8 M1766.8,894.65 H1769.0 V908.25 H1766.8" fill="none" stroke="#86c062" stroke-width="1.2" />
<path d="M1762.0,905.4499999999999 L1763.1,897.25 L1764.3,903.15 L1765.5,897.25 L1766.6,905.4499999999999" fill="none" stroke="#86c062" stroke-width="0.8" />
<text x="1778.6" y="906.9499999999999" font-size="13.2" fill="#3d3d3d" textLength="118.1" lengthAdjust="spacingAndGlyphs" >Nov 29, 2018 12:27 AM</text>
<rect x="1728" y="914.4" width="316" height="21.300000000000068" fill="#f9f9f9" />
<rect x="1728" y="935.2" width="316" height="1" fill="#e9e9e9" />
<rect x="1734.8" y="920.58" width="9.3" height="9.3" fill="none" stroke="#7a7a7a" stroke-width="1.2" rx="1.8"/>
<path d="M1761.8,917.1800000000001 H1759.6 V930.7800000000001 H1761.8 M1766.8,917.1800000000001 H1769.0 V930.7800000000001 H1766.8" fill="none" stroke="#86c062" stroke-width="1.2" />
<path d="M1762.0,927.98 L1763.1,919.7800000000001 L1764.3,925.6800000000001 L1765.5,919.7800000000001 L1766.6,927.98" fill="none" stroke="#86c062" stroke-width="0.8" />
<text x="1778.6" y="929.48" font-size="13.2" fill="#3d3d3d" textLength="112.4" lengthAdjust="spacingAndGlyphs" >Nov 29, 2018 3:50 PM</text>
</svg>
</body></html>
